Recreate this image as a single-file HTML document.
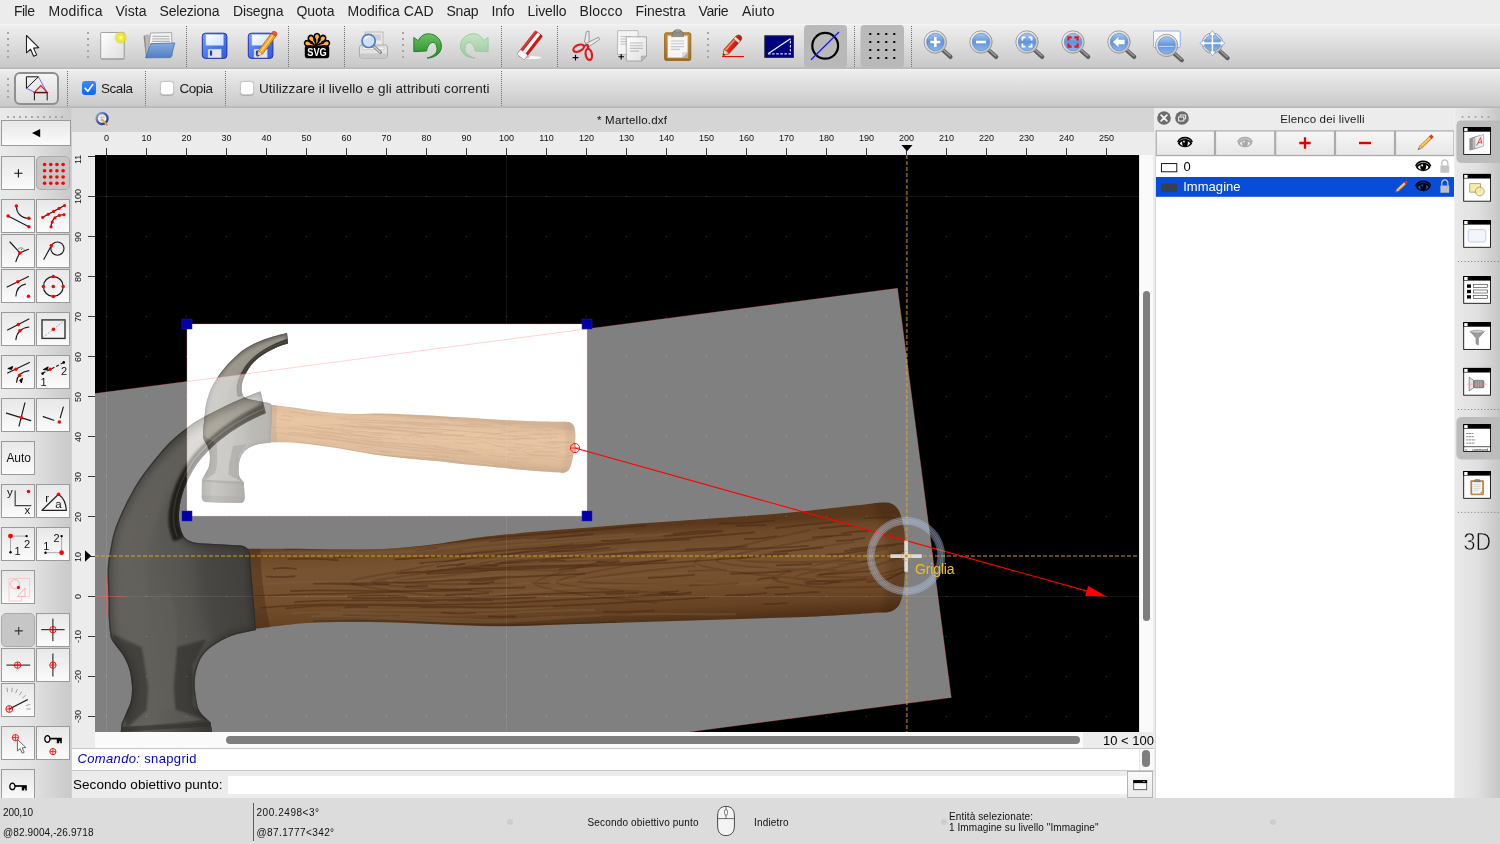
<!DOCTYPE html>
<html lang="it"><head><meta charset="utf-8"><title>Martello.dxf</title>
<style>
*{box-sizing:border-box;margin:0;padding:0}
html,body{width:1500px;height:844px;overflow:hidden;background:#ececec;font-family:"Liberation Sans",sans-serif;}
#root{position:absolute;left:0;top:0;width:1500px;height:844px;will-change:transform}
.t{position:absolute;white-space:nowrap;display:block}
.abs{position:absolute}
#menubar{position:absolute;left:0;top:0;width:1500px;height:24px;background:#ececec}
#tb1{position:absolute;left:0;top:24px;width:1500px;height:45px;background:linear-gradient(#f7f7f7 0,#eeeeee 1.5px,#e6e6e6 25%,#d6d6d6 62%,#c9c9c9 42.5px,#b8b8b8 44px,#b8b8b8)}
#tb2{position:absolute;left:0;top:69px;width:1500px;height:39px;background:linear-gradient(#f6f6f6 0,#ededed 1.5px,#e4e4e4 25%,#d6d6d6 62%,#cacaca 36.5px,#b7b7b7 38px,#b7b7b7)}
.vsep{position:absolute;width:0;border-left:1px dotted #6e6e6e}
#left{position:absolute;left:0;top:108px;width:72px;height:690px;background:linear-gradient(90deg,#eaeaea,#e4e4e4 40%,#c9c9c9);border-right:1px solid #d0d0d0;overflow:hidden}
.lb{position:absolute;width:34px;height:34px;border:1px solid #9a9a9a;background:linear-gradient(#e8e8e8,#f0f0f0 45%,#fbfbfb);}
.lb.on{background:#c6c6c6;border-color:#a9a9a9;border-radius:5px}
.lb svg{position:absolute;left:0;top:0}
#doc{position:absolute;left:72px;top:108px;width:1082px;height:690px;background:#ececec}
#status{position:absolute;left:0;top:798px;width:1500px;height:46px;background:#dcdcdc}
#layers{position:absolute;left:1154px;top:108px;width:301px;height:690px;background:#ececec}
#rtb{position:absolute;left:1454px;top:108px;width:46px;height:690px;background:linear-gradient(90deg,#e9e9e9,#e0e0e0 50%,#c6c6c6);border-left:1px solid #f0f0f0}

#titlebar{position:absolute;left:0;top:0;width:1082px;height:24px;background:#d5d5d5}
#hruler{position:absolute;left:0;top:24px;width:1082px;height:23px;background:#ececec;overflow:hidden}
#vruler{position:absolute;left:0;top:47px;width:23px;height:577px;background:#ececec;overflow:hidden}
#canvas{position:absolute;left:23px;top:47px;width:1044px;height:577px;background:#000;overflow:hidden}
#hscroll{position:absolute;left:23px;top:624px;width:1059px;height:16px;background:linear-gradient(90deg,#fafafa 0,#fafafa 988px,#ececec 988px)}
#vscroll{position:absolute;left:1067px;top:47px;width:14px;height:577px;background:#fafafa;border-left:1px solid #e6e6e6}
.thumb{position:absolute;background:#7e7e7e;border-radius:4px}
#cmd{position:absolute;left:0;top:640px;width:1082px;height:23px;background:#fff;border-top:1px solid #c4c4c4;border-bottom:1px solid #c9c9c9}
#inp{position:absolute;left:155.5px;top:668px;width:899px;height:18px;background:#fff}
#inbtn{position:absolute;left:1055px;top:663px;width:26px;height:27px;border:1px solid #b4b4b4;background:linear-gradient(#fafafa,#e9e9e9)}
.vl{position:absolute;white-space:nowrap;font-size:9px;line-height:10px;color:#111;transform-origin:0 0;transform:rotate(-90deg)}
</style></head>
<body>
<div id="root">
<div id="menubar">
<span class="t" style="left:14.00px;top:1.65px;font-size:14px;line-height:19px;color:#1e1e1e;letter-spacing:-0.520px;">File</span>
<span class="t" style="left:48.50px;top:1.65px;font-size:14px;line-height:19px;color:#1e1e1e;letter-spacing:0.267px;">Modifica</span>
<span class="t" style="left:115.50px;top:1.65px;font-size:14px;line-height:19px;color:#1e1e1e;letter-spacing:0.032px;">Vista</span>
<span class="t" style="left:159.50px;top:1.65px;font-size:14px;line-height:19px;color:#1e1e1e;letter-spacing:-0.186px;">Seleziona</span>
<span class="t" style="left:233.00px;top:1.65px;font-size:14px;line-height:19px;color:#1e1e1e;letter-spacing:-0.144px;">Disegna</span>
<span class="t" style="left:296.50px;top:1.65px;font-size:14px;line-height:19px;color:#1e1e1e;letter-spacing:-0.034px;">Quota</span>
<span class="t" style="left:347.50px;top:1.65px;font-size:14px;line-height:19px;color:#1e1e1e;letter-spacing:0.038px;">Modifica CAD</span>
<span class="t" style="left:446.50px;top:1.65px;font-size:14px;line-height:19px;color:#1e1e1e;letter-spacing:-0.233px;">Snap</span>
<span class="t" style="left:491.50px;top:1.65px;font-size:14px;line-height:19px;color:#1e1e1e;letter-spacing:-0.117px;">Info</span>
<span class="t" style="left:527.50px;top:1.65px;font-size:14px;line-height:19px;color:#1e1e1e;letter-spacing:-0.115px;">Livello</span>
<span class="t" style="left:579.50px;top:1.65px;font-size:14px;line-height:19px;color:#1e1e1e;letter-spacing:0.196px;">Blocco</span>
<span class="t" style="left:635.50px;top:1.65px;font-size:14px;line-height:19px;color:#1e1e1e;letter-spacing:-0.082px;">Finestra</span>
<span class="t" style="left:698.50px;top:1.65px;font-size:14px;line-height:19px;color:#1e1e1e;letter-spacing:-0.411px;">Varie</span>
<span class="t" style="left:742.00px;top:1.65px;font-size:14px;line-height:19px;color:#1e1e1e;letter-spacing:0.147px;">Aiuto</span>
</div>
<div id="tb1">
<div class="abs" style="left:7px;top:8px;width:2px;height:2px;background:#a6a6a6"></div><div class="abs" style="left:7px;top:14px;width:2px;height:2px;background:#a6a6a6"></div><div class="abs" style="left:7px;top:20px;width:2px;height:2px;background:#a6a6a6"></div><div class="abs" style="left:7px;top:26px;width:2px;height:2px;background:#a6a6a6"></div><div class="abs" style="left:7px;top:32px;width:2px;height:2px;background:#a6a6a6"></div>
<div class="abs" style="left:87px;top:8px;width:2px;height:2px;background:#a6a6a6"></div><div class="abs" style="left:87px;top:14px;width:2px;height:2px;background:#a6a6a6"></div><div class="abs" style="left:87px;top:20px;width:2px;height:2px;background:#a6a6a6"></div><div class="abs" style="left:87px;top:26px;width:2px;height:2px;background:#a6a6a6"></div><div class="abs" style="left:87px;top:32px;width:2px;height:2px;background:#a6a6a6"></div>
<div class="abs" style="left:402px;top:8px;width:2px;height:2px;background:#a6a6a6"></div><div class="abs" style="left:402px;top:14px;width:2px;height:2px;background:#a6a6a6"></div><div class="abs" style="left:402px;top:20px;width:2px;height:2px;background:#a6a6a6"></div><div class="abs" style="left:402px;top:26px;width:2px;height:2px;background:#a6a6a6"></div><div class="abs" style="left:402px;top:32px;width:2px;height:2px;background:#a6a6a6"></div>
<div class="abs" style="left:707px;top:8px;width:2px;height:2px;background:#a6a6a6"></div><div class="abs" style="left:707px;top:14px;width:2px;height:2px;background:#a6a6a6"></div><div class="abs" style="left:707px;top:20px;width:2px;height:2px;background:#a6a6a6"></div><div class="abs" style="left:707px;top:26px;width:2px;height:2px;background:#a6a6a6"></div><div class="abs" style="left:707px;top:32px;width:2px;height:2px;background:#a6a6a6"></div>
<div class="vsep" style="left:185.5px;top:1.5px;height:41px"></div>
<div class="vsep" style="left:288.0px;top:1.5px;height:41px"></div>
<div class="vsep" style="left:344.0px;top:1.5px;height:41px"></div>
<div class="vsep" style="left:501.0px;top:1.5px;height:41px"></div>
<div class="vsep" style="left:557.0px;top:1.5px;height:41px"></div>
<div class="vsep" style="left:853.5px;top:1.5px;height:41px"></div>
<div class="vsep" style="left:910.5px;top:1.5px;height:41px"></div>
<svg class="abs" style="left:0;top:0" width="1500" height="45" viewBox="0 24 1500 45">
<defs>
<linearGradient id="pg" x1="0" y1="0" x2="1" y2="1"><stop offset="0" stop-color="#fff"/><stop offset="1" stop-color="#dedede"/></linearGradient>
<radialGradient id="glow"><stop offset="0" stop-color="#ffffc8"/><stop offset=".3" stop-color="#f4ee3a"/><stop offset=".7" stop-color="#e2dc2a" stop-opacity=".75"/><stop offset="1" stop-color="#e2dc2a" stop-opacity="0"/></radialGradient>
<linearGradient id="fold" x1="0" y1="0" x2="0" y2="1"><stop offset="0" stop-color="#86ace0"/><stop offset="1" stop-color="#4f7fc4"/></linearGradient>
<linearGradient id="flp" x1="0" y1="0" x2="1" y2="1"><stop offset="0" stop-color="#7aa2ff"/><stop offset=".5" stop-color="#4a78ee"/><stop offset="1" stop-color="#2f5be0"/></linearGradient>
<linearGradient id="lbl" x1="0" y1="0" x2="1" y2="1"><stop offset="0" stop-color="#fff"/><stop offset="1" stop-color="#cfe0ff"/></linearGradient>
<linearGradient id="grn" x1="0" y1="0" x2="0" y2="1"><stop offset="0" stop-color="#6fc060"/><stop offset="1" stop-color="#218a2c"/></linearGradient>
<linearGradient id="grn2" x1="0" y1="0" x2="0" y2="1"><stop offset="0" stop-color="#c4e4bf"/><stop offset="1" stop-color="#8cc892"/></linearGradient>
<linearGradient id="lensb" x1="0" y1="0" x2="0" y2="1"><stop offset="0" stop-color="#a9c8f2"/><stop offset=".5" stop-color="#5f93dc"/><stop offset="1" stop-color="#8ab6ee"/></linearGradient>
<linearGradient id="ring" x1="0" y1="0" x2="1" y2="1"><stop offset="0" stop-color="#fafafa"/><stop offset="1" stop-color="#b8b8b8"/></linearGradient>
<linearGradient id="clipb" x1="0" y1="0" x2="0" y2="1"><stop offset="0" stop-color="#c98a2e"/><stop offset="1" stop-color="#a86c1c"/></linearGradient>
<linearGradient id="pencr" x1="0" y1="0" x2="1" y2="1"><stop offset="0" stop-color="#ff6a5a"/><stop offset=".5" stop-color="#e02214"/><stop offset="1" stop-color="#a8140c"/></linearGradient>
<g id="mag">
 <path d="M7.5 8 L15.2 14.9" stroke="#5e5e5e" stroke-width="4.2" stroke-linecap="round"/>
 <path d="M8 7.6 L14.8 13.8" stroke="#9a9a9a" stroke-width="1.5" stroke-linecap="round"/>
 <circle cx="0" cy="0" r="11.2" fill="url(#ring)" stroke="#8a8a8a" stroke-width=".8"/>
 <circle cx="0" cy="0" r="8.7" fill="url(#lensb)" stroke="#5a7fb8" stroke-width=".6"/>
</g>
</defs>
<rect x="804" y="25" width="43" height="42.5" rx="4" fill="#b9b9b9"/>
<rect x="860.5" y="25" width="43.5" height="42.5" rx="4" fill="#b9b9b9"/>
<path d="M26.5 35.5 L26.5 52.8 L30.6 49.2 L33.6 56.2 L36.6 54.9 L33.6 48.1 L38.8 47.6z" fill="#fff" stroke="#222" stroke-width="1.1" stroke-linejoin="round"/>
<rect x="101" y="33" width="23.5" height="27" rx="1" fill="#9a9a9a" opacity=".55"/>
<rect x="100.7" y="32.5" width="23.5" height="26.3" rx=".8" fill="url(#pg)" stroke="#8e8e8e" stroke-width=".8"/>
<circle cx="120.8" cy="37.7" r="7" fill="url(#glow)"/>
<path d="M143.5 36 L148 34.5 L151 58 L146 58z" fill="#8a8a8a"/>
<path d="M145 35.5 L149.5 34.8 L152 58 L147 58z" fill="#b9b9b9"/>
<path d="M150.5 33 L171.5 32.6 L172.5 56 L147.5 56z" fill="#f4f4f4" stroke="#8a8a8a" stroke-width=".7"/>
<path d="M152.5 36.3 H169.5 M152.2 38.8 H169.8 M152 41.3 H170" stroke="#b5b5b5" stroke-width="1.3"/>
<path d="M150.8 43.6 L174.8 43 L170.8 57.6 L145.6 57.8z" fill="url(#fold)" stroke="#4470b4" stroke-width=".8" stroke-linejoin="round"/>
<rect x="202.3" y="33.2" width="24.6" height="25.2" rx="3.2" fill="url(#flp)" stroke="#2230a6" stroke-width="1"/>
<rect x="205.9" y="34.4" width="17.6" height="11" fill="url(#lbl)" stroke="#9db8f4" stroke-width=".5"/>
<rect x="207.9" y="49" width="13.6" height="8.9" fill="#e4e4ea" stroke="#6c86d8" stroke-width=".5"/>
<rect x="209.9" y="50.6" width="2.2" height="5" fill="#1f3cc0"/>
<rect x="248.3" y="33.2" width="24.6" height="25.2" rx="3.2" fill="url(#flp)" stroke="#2230a6" stroke-width="1"/>
<rect x="251.9" y="34.4" width="17.6" height="11" fill="url(#lbl)" stroke="#9db8f4" stroke-width=".5"/>
<rect x="253.9" y="49" width="13.6" height="8.9" fill="#e4e4ea" stroke="#6c86d8" stroke-width=".5"/>
<rect x="255.9" y="50.6" width="2.2" height="5" fill="#1f3cc0"/>
<path d="M258.3 50.8 L271.3 33.2 L275.8 36.4 L262.6 54z" fill="#f5a623" stroke="#a85f10" stroke-width=".7"/>
<path d="M260.4 52.3 L273.5 34.7" stroke="#ffd68a" stroke-width="1.3"/>
<path d="M271.3 33.2 L272.6 31.6 Q274.8 30.6 276.6 32.6 L277 34.8 L275.8 36.4z" fill="#e8574a" stroke="#a83228" stroke-width=".5"/>
<path d="M258.3 50.8 L257.2 56.6 L262.6 54z" fill="#f1d9b0" stroke="#a85f10" stroke-width=".5"/>
<path d="M257.2 56.6 L257.7 54.4 L259.3 55.6z" fill="#222"/>
<g stroke="#000" stroke-width="1.6" fill="#ffb13b" stroke-linejoin="round">
<path transform="translate(317 46.5) rotate(-72)" d="M-1.5 0 L-1.5 -7 C-4 -9.5 -2.5 -13 0 -13 C2.5 -13 4 -9.5 1.5 -7 L1.5 0z"/>
<path transform="translate(317 46.5) rotate(-36)" d="M-1.5 0 L-1.5 -7 C-4 -9.5 -2.5 -13 0 -13 C2.5 -13 4 -9.5 1.5 -7 L1.5 0z"/>
<path transform="translate(317 46.5) rotate(0)" d="M-1.5 0 L-1.5 -7 C-4 -9.5 -2.5 -13 0 -13 C2.5 -13 4 -9.5 1.5 -7 L1.5 0z"/>
<path transform="translate(317 46.5) rotate(36)" d="M-1.5 0 L-1.5 -7 C-4 -9.5 -2.5 -13 0 -13 C2.5 -13 4 -9.5 1.5 -7 L1.5 0z"/>
<path transform="translate(317 46.5) rotate(72)" d="M-1.5 0 L-1.5 -7 C-4 -9.5 -2.5 -13 0 -13 C2.5 -13 4 -9.5 1.5 -7 L1.5 0z"/>
</g>
<rect x="304.8" y="45.6" width="24.4" height="12.6" rx="2.6" fill="#000"/>
<text x="317" y="56.4" font-family="Liberation Sans, sans-serif" font-weight="bold" font-size="10.8" fill="#fff" text-anchor="middle" textLength="19.5" lengthAdjust="spacingAndGlyphs">SVG</text>
<rect x="365" y="32" width="18" height="14" fill="#e9e9e9" stroke="#a8a8a8" stroke-width=".7"/>
<rect x="372" y="34.5" width="9" height="6" fill="#d0d0d0"/>
<path d="M361.5 45 L385.5 45 Q387.5 45.3 387.5 48 L387.5 55.8 Q387.3 58 385 58 L361.6 58 Q359.4 57.8 359.4 55.6 L359.4 48 Q359.6 45.2 361.5 45z" fill="#e3e3e3" stroke="#9c9c9c" stroke-width=".8"/>
<rect x="360" y="53.4" width="27" height="4.4" rx="1.4" fill="#c9c9c9"/>
<rect x="362.5" y="47" width="21.5" height="2.4" fill="#f8f8f8" stroke="#aaa" stroke-width=".4"/>
<path d="M373.6 46.2 L380.5 52.4" stroke="#8d8d8d" stroke-width="3.2" stroke-linecap="round"/>
<path d="M373.6 46.2 L380 52" stroke="#d2d2d2" stroke-width="1.2" stroke-linecap="round"/>
<circle cx="368.6" cy="40.9" r="6.6" fill="#cfe0f6" stroke="#4f7dc8" stroke-width="1.7"/>
<path d="M364.8 39.4 A4.2 4.2 0 0 1 370.5 36.8" stroke="#fff" stroke-width="1.4" fill="none" opacity=".9"/>
<path d="M413.8 37.4 L413.8 51.7 L426.6 51 C427 47.5 429.5 42.6 432.8 42.4 C435.5 42.4 437.2 46 437 49.9 C436.6 53.5 433 56.5 427 58.1 C437 57.7 442.1 51.6 441.4 45 C440.5 37.6 433.5 32.7 426 34 C422.6 34.8 420 36.8 418.2 40.7z" fill="url(#grn)" stroke="#1d7a28" stroke-width=".9" stroke-linejoin="round"/>
<g opacity=".85"><path transform="translate(901.9 0) scale(-1 1)" d="M413.8 37.4 L413.8 51.7 L426.6 51 C427 47.5 429.5 42.6 432.8 42.4 C435.5 42.4 437.2 46 437 49.9 C436.6 53.5 433 56.5 427 58.1 C437 57.7 442.1 51.6 441.4 45 C440.5 37.6 433.5 32.7 426 34 C422.6 34.8 420 36.8 418.2 40.7z" fill="url(#grn2)" stroke="#8cc592" stroke-width=".9" stroke-linejoin="round"/></g>
<ellipse cx="530" cy="57.6" rx="12" ry="1.5" fill="#fff" opacity=".85"/>
<ellipse cx="524" cy="57" rx="6" ry="1.6" fill="#8c8c8c" opacity=".45"/>
<g transform="translate(529.8 45.2) rotate(-52)"><rect x="-15" y="-4.6" width="30" height="9.2" rx="1.4" fill="#d01818" stroke="#8c0f0f" stroke-width=".5"/><rect x="-9.4" y="-1.7" width="24.2" height="3.4" fill="#fff"/><rect x="-15" y="-4.6" width="5.8" height="9.2" rx="1" fill="#f6f6f6" stroke="#bdbdbd" stroke-width=".5"/><rect x="-9.2" y="-4.6" width="24.2" height="2" fill="#ee4a4a" opacity=".6"/></g>
<path d="M584.4 42 L586.4 31.6 L589 31 L589.2 45z" fill="#e8e8e8" stroke="#777" stroke-width=".7" stroke-linejoin="round"/>
<path d="M585.6 43.6 L598.6 37.2 L599.8 39.4 L588.6 46.8z" fill="#e8e8e8" stroke="#777" stroke-width=".7" stroke-linejoin="round"/>
<ellipse cx="578.6" cy="48.2" rx="5.6" ry="3.1" transform="rotate(-24 578.6 48.2)" fill="none" stroke="#dc1c24" stroke-width="2.2"/>
<ellipse cx="588.8" cy="54.4" rx="3.1" ry="5.6" transform="rotate(-12 588.8 54.4)" fill="none" stroke="#dc1c24" stroke-width="2.2"/>
<path d="M583 46 L587.6 45 L588.6 49" stroke="#dc1c24" stroke-width="2.2" fill="none"/>
<path d="M572.6 57.6 H578.4 M575.5 54.7 V60.5" stroke="#000" stroke-width="1.1"/>
<path d="M617.6 30.6 L638 30.6 L638.6 54.4 L617.4 54.4z" fill="#f3f3f3" stroke="#a6a6a6" stroke-width=".7"/>
<path d="M620.6 36.5 H631 M620.6 39 H631 M620.6 41.5 H631 M620.6 44 H628" stroke="#c3c3c3" stroke-width="1"/>
<path d="M626.2 36.8 L646.4 36.8 L646.6 56 L641.4 61 L626.4 61z" fill="url(#pg)" stroke="#9a9a9a" stroke-width=".8"/>
<path d="M646.6 56 L641.4 61 L641.2 56.2z" fill="#bdbdbd" stroke="#8e8e8e" stroke-width=".5"/>
<path d="M630 43 H643 M630 45.7 H643 M630 48.4 H643 M630 51.1 H639" stroke="#bfbfbf" stroke-width="1.1"/>
<path d="M618.4 56.8 H624 M621.2 54 V59.6" stroke="#000" stroke-width="1.1"/>
<rect x="664.6" y="32.8" width="26.2" height="27.6" rx="1.6" fill="url(#clipb)" stroke="#8c5a14" stroke-width=".8"/>
<path d="M667.6 35.6 H687.8 V57.8 H667.6z" fill="#f6f6f6" stroke="#b0b0b0" stroke-width=".5"/>
<path d="M687.8 52.6 L682.6 57.8 L687.8 57.8z" fill="#a8a8a8"/><path d="M682.6 57.8 L682.8 52.8 L687.8 52.6z" fill="#dedede" stroke="#aaa" stroke-width=".4"/>
<path d="M671 41 H684 M671 43.8 H684 M671 46.6 H684 M671 49.4 H680" stroke="#c6c6c6" stroke-width="1.1"/>
<path d="M671.6 36.6 L672.8 32.2 Q673.2 31 674.6 31 L680.8 31 Q682.2 31 682.6 32.2 L683.8 36.6z" fill="#8e8e86" stroke="#66665e" stroke-width=".6"/>
<rect x="674.6" y="29.8" width="6.2" height="2.2" rx=".8" fill="#a4a49c" stroke="#66665e" stroke-width=".5"/>
<path d="M722 56.5 H744" stroke="#f00" stroke-width="1.1"/>
<g transform="translate(723 55.4) rotate(-48)"><path d="M0 0 L5.4 -3.3 L22.8 -3.3 Q26.4 -3 26.4 0 Q26.4 3 22.8 3.3 L5.4 3.3z" fill="url(#pencr)" stroke="#7a3a10" stroke-width=".6"/><path d="M0 0 L5.4 -3.3 L5.4 3.3z" fill="#f0d2a0" stroke="#7a5a20" stroke-width=".5"/><path d="M0 0 L1.9 -1.15 L1.9 1.15z" fill="#222"/><rect x="19.6" y="-3.3" width="2.6" height="6.6" fill="#d9d9d9" stroke="#888" stroke-width=".3"/><path d="M6 -1.6 H19" stroke="#ff9a8a" stroke-width="1.2"/></g>
<rect x="764.8" y="35.8" width="28.6" height="21.6" fill="#000080" stroke="#2a2a2a" stroke-width="1"/>
<path d="M768 53.8 L790.4 38.8" stroke="#fff" stroke-width="1.1"/>
<path d="M768 53.8 H790.4 V38.8" stroke="#d8d8f4" stroke-width="1.2" stroke-dasharray="2.6 1.5" fill="none"/>
<circle cx="825.2" cy="45.8" r="12.9" fill="none" stroke="#000" stroke-width="2.2"/>
<path d="M811 59.8 L839 32" stroke="#1414ff" stroke-width="1.2"/>
<rect x="869.3" y="33" width="2" height="2" fill="#000"/>
<rect x="869.3" y="41" width="2" height="2" fill="#000"/>
<rect x="869.3" y="49" width="2" height="2" fill="#000"/>
<rect x="869.3" y="57" width="2" height="2" fill="#000"/>
<rect x="877.3" y="33" width="2" height="2" fill="#000"/>
<rect x="877.3" y="41" width="2" height="2" fill="#000"/>
<rect x="877.3" y="49" width="2" height="2" fill="#000"/>
<rect x="877.3" y="57" width="2" height="2" fill="#000"/>
<rect x="885.3" y="33" width="2" height="2" fill="#000"/>
<rect x="885.3" y="41" width="2" height="2" fill="#000"/>
<rect x="885.3" y="49" width="2" height="2" fill="#000"/>
<rect x="885.3" y="57" width="2" height="2" fill="#000"/>
<rect x="893.3" y="33" width="2" height="2" fill="#000"/>
<rect x="893.3" y="41" width="2" height="2" fill="#000"/>
<rect x="893.3" y="49" width="2" height="2" fill="#000"/>
<rect x="893.3" y="57" width="2" height="2" fill="#000"/>
<g transform="translate(935.3 42)"><use href="#mag"/><path d="M-5 0H5M0 -5V5" stroke="#fff" stroke-width="2.6"/></g>
<g transform="translate(981 42)"><use href="#mag"/><path d="M-5 0H5" stroke="#fff" stroke-width="2.6"/></g>
<g transform="translate(1027 42)"><use href="#mag"/><path d="M-4.6 -1.6V-4.6H-1.6M1.6 -4.6H4.6V-1.6M4.6 1.6V4.6H1.6M-1.6 4.6H-4.6V1.6" stroke="#fff" stroke-width="1.7" fill="none"/></g>
<g transform="translate(1073 42)"><use href="#mag"/><path d="M-4.6 -1.4V-4.6H-1.4M1.4 -4.6H4.6V-1.4M4.6 1.4V4.6H1.4M-1.4 4.6H-4.6V1.4" stroke="#f01010" stroke-width="2.2" fill="none"/></g>
<g transform="translate(1119 42)"><use href="#mag"/><path d="M-6 0 L-.6 -5 L-.6 -2.2 L5.6 -2.2 L5.6 2.2 L-.6 2.2 L-.6 5z" fill="#fff"/></g>
<rect x="1153.6" y="31" width="26.6" height="16.6" rx="1" fill="#fafcff" stroke="#86a8e0" stroke-width=".9"/>
<g transform="translate(1166.6 45.4)"><use href="#mag"/><path d="M-8 1 H8" stroke="#d6e6fa" stroke-width="1.2" opacity=".7"/></g>
<g transform="translate(1212.4 43.2)"><path d="M7.5 8 L15.2 14.9" stroke="#5e5e5e" stroke-width="4.2" stroke-linecap="round"/><path d="M8 7.6 L14.8 13.8" stroke="#9a9a9a" stroke-width="1.5" stroke-linecap="round"/><circle r="10.2" fill="url(#ring)" stroke="#8a8a8a" stroke-width=".8"/><circle r="8" fill="url(#lensb)" stroke="#5a7fb8" stroke-width=".6"/><path d="M0 -12.6 L3.4 -8 L1.2 -8 L1.2 -1.2 L8 -1.2 L8 -3.4 L12.6 0 L8 3.4 L8 1.2 L1.2 1.2 L1.2 8 L3.4 8 L0 12.6 L-3.4 8 L-1.2 8 L-1.2 1.2 L-8 1.2 L-8 3.4 L-12.6 0 L-8 -3.4 L-8 -1.2 L-1.2 -1.2 L-1.2 -8 L-3.4 -8z" fill="#fff" stroke="#6f9ae0" stroke-width=".7"/></g>
</svg>
</div>
<div id="tb2">
<div class="abs" style="left:7px;top:9px;width:2px;height:2px;background:#a6a6a6"></div><div class="abs" style="left:7px;top:15px;width:2px;height:2px;background:#a6a6a6"></div><div class="abs" style="left:7px;top:21px;width:2px;height:2px;background:#a6a6a6"></div><div class="abs" style="left:7px;top:27px;width:2px;height:2px;background:#a6a6a6"></div>
<div class="vsep" style="left:67.0px;top:2px;height:35px"></div>
<div class="vsep" style="left:145.0px;top:2px;height:35px"></div>
<div class="vsep" style="left:225.0px;top:2px;height:35px"></div>
<div class="vsep" style="left:501.0px;top:2px;height:35px"></div>
<div class="abs" style="left:14px;top:3px;width:45px;height:33px;border:2px solid #8f8f8f;border-radius:6px;background:linear-gradient(#f4f4f4,#dcdcdc)"></div>
<svg class="abs" style="left:14px;top:3px" width="46" height="34" viewBox="14 72 46 34"><path d="M26.4 76.8 H38.4 L26.4 88.4z" fill="none" stroke="#111" stroke-width="1"/><path d="M38.4 76.8 L47 92.4 M26.4 88.4 L34.6 92.2" stroke="#3a3ae0" stroke-width=".7" fill="none"/><path d="M34.4 92.4 L40.8 85.6 L47.2 92.4z" fill="none" stroke="#f01616" stroke-width="1.3"/><path d="M34.4 100.4 V92.8 H47.2 V100.4" fill="none" stroke="#111" stroke-width="1"/></svg>
<div class="abs" style="left:82px;top:12px;width:14px;height:14px;border-radius:3.2px;background:linear-gradient(#3b8bff,#0a6af5)"></div>
<svg class="abs" style="left:82px;top:12px" width="14" height="14" viewBox="0 0 14 14"><path d="M3.2 7.4 L5.8 10.2 L10.8 3.6" fill="none" stroke="#fff" stroke-width="1.7" stroke-linecap="round" stroke-linejoin="round"/></svg>
<div class="abs" style="left:159.5px;top:12px;width:14px;height:14px;border-radius:3.2px;background:#fff;border:.6px solid #c9c9c9;box-shadow:0 .5px 1px rgba(0,0,0,.18)"></div>
<div class="abs" style="left:239.5px;top:12px;width:14px;height:14px;border-radius:3.2px;background:#fff;border:.6px solid #c9c9c9;box-shadow:0 .5px 1px rgba(0,0,0,.18)"></div>
<span class="t" style="left:101.00px;top:11.12px;font-size:13.5px;line-height:18px;color:#1c1c1c;letter-spacing:-0.443px;">Scala</span>
<span class="t" style="left:179.50px;top:11.12px;font-size:13.5px;line-height:18px;color:#1c1c1c;letter-spacing:-0.444px;">Copia</span>
<span class="t" style="left:259.00px;top:11.12px;font-size:13.5px;line-height:18px;color:#1c1c1c;letter-spacing:0.054px;">Utilizzare il livello e gli attributi correnti</span>
</div>
<div id="left">
<div class="abs" style="left:7.0px;top:8px;width:2px;height:2px;background:#a8a8a8"></div>
<div class="abs" style="left:13.0px;top:8px;width:2px;height:2px;background:#a8a8a8"></div>
<div class="abs" style="left:19.0px;top:8px;width:2px;height:2px;background:#a8a8a8"></div>
<div class="abs" style="left:25.0px;top:8px;width:2px;height:2px;background:#a8a8a8"></div>
<div class="abs" style="left:31.0px;top:8px;width:2px;height:2px;background:#a8a8a8"></div>
<div class="abs" style="left:37.0px;top:8px;width:2px;height:2px;background:#a8a8a8"></div>
<div class="abs" style="left:43.0px;top:8px;width:2px;height:2px;background:#a8a8a8"></div>
<div class="abs" style="left:49.0px;top:8px;width:2px;height:2px;background:#a8a8a8"></div>
<div class="abs" style="left:55.0px;top:8px;width:2px;height:2px;background:#a8a8a8"></div>
<div class="abs" style="left:61.0px;top:8px;width:2px;height:2px;background:#a8a8a8"></div>
<div class="lb" style="left:1px;top:12px;width:70px;height:26px"><svg width="70" height="26" viewBox="0 0 70 26" style="left:-1px;top:-1px"><path d="M31 13.1L39.2 9V17.2z" fill="#000"/></svg></div>
<div class="lb" style="left:1px;top:48px"><svg width="34" height="34" viewBox="0 0 34 34" style="left:-.5px;top:-.5px"><path d="M12.3 16.3H20.5M16.4 12.2V20.4" stroke="#111" stroke-width="1.1"/></svg></div>
<div class="lb on" style="left:36px;top:48px"><svg width="34" height="34" viewBox="0 0 34 34" style="left:-.5px;top:-.5px"><circle cx="7.6" cy="7.5" r="1.8" fill="#ff0000"/><circle cx="7.6" cy="13.73" r="1.8" fill="#ff0000"/><circle cx="7.6" cy="19.96" r="1.8" fill="#ff0000"/><circle cx="7.6" cy="26.19" r="1.8" fill="#ff0000"/><circle cx="13.77" cy="7.5" r="1.8" fill="#ff0000"/><circle cx="13.77" cy="13.73" r="1.8" fill="#ff0000"/><circle cx="13.77" cy="19.96" r="1.8" fill="#ff0000"/><circle cx="13.77" cy="26.19" r="1.8" fill="#ff0000"/><circle cx="19.939999999999998" cy="7.5" r="1.8" fill="#ff0000"/><circle cx="19.939999999999998" cy="13.73" r="1.8" fill="#ff0000"/><circle cx="19.939999999999998" cy="19.96" r="1.8" fill="#ff0000"/><circle cx="19.939999999999998" cy="26.19" r="1.8" fill="#ff0000"/><circle cx="26.11" cy="7.5" r="1.8" fill="#ff0000"/><circle cx="26.11" cy="13.73" r="1.8" fill="#ff0000"/><circle cx="26.11" cy="19.96" r="1.8" fill="#ff0000"/><circle cx="26.11" cy="26.19" r="1.8" fill="#ff0000"/></svg></div>
<div class="lb" style="left:1px;top:91px"><svg width="34" height="34" viewBox="0 0 34 34" style="left:-.5px;top:-.5px"><path d="M6.1 15.9L26.9 26.8M14.4 6C14.4 13 19 18.3 26.9 18.3" stroke="#1a1a1a" stroke-width="1.15" fill="none" stroke-linecap="round"/><circle cx="6.1" cy="15.9" r="1.75" fill="#ff0000"/><circle cx="26.9" cy="26.8" r="1.75" fill="#ff0000"/><circle cx="14.4" cy="6" r="1.75" fill="#ff0000"/><circle cx="26.9" cy="18.3" r="1.75" fill="#ff0000"/></svg></div>
<div class="lb" style="left:36px;top:91px"><svg width="34" height="34" viewBox="0 0 34 34" style="left:-.5px;top:-.5px"><path d="M5.7 17.3L27.5 5.5M14 26.8C14.6 19 19.5 14.9 27 14.7" stroke="#1a1a1a" stroke-width="1.15" fill="none" stroke-linecap="round"/><circle cx="5.7" cy="17.3" r="1.6" fill="#ff0000"/><circle cx="11.15" cy="14.350000000000001" r="1.6" fill="#ff0000"/><circle cx="16.6" cy="11.4" r="1.6" fill="#ff0000"/><circle cx="22.05" cy="8.45" r="1.6" fill="#ff0000"/><circle cx="27.5" cy="5.5" r="1.6" fill="#ff0000"/><circle cx="14" cy="26.8" r="1.6" fill="#ff0000"/><circle cx="15.2" cy="22.1" r="1.6" fill="#ff0000"/><circle cx="18" cy="17.8" r="1.6" fill="#ff0000"/><circle cx="22.3" cy="15.4" r="1.6" fill="#ff0000"/><circle cx="27" cy="14.7" r="1.6" fill="#ff0000"/></svg></div>
<div class="lb" style="left:1px;top:126px"><svg width="34" height="34" viewBox="0 0 34 34" style="left:-.5px;top:-.5px"><path d="M8 7L17.9 17.9L26.5 14.3M17.9 17.9C16 21 14.6 24 13.9 26.6" stroke="#1a1a1a" stroke-width="1.15" fill="none" stroke-linecap="round"/><path d="M15.6 14.6C17.4 12 21.4 12.4 22.4 15.4" stroke="#444" stroke-width=".6" fill="none"/><circle cx="19.4" cy="14.6" r=".5" fill="#444"/><circle cx="17.9" cy="17.9" r="1.75" fill="#ff0000"/></svg></div>
<div class="lb" style="left:36px;top:126px"><svg width="34" height="34" viewBox="0 0 34 34" style="left:-.5px;top:-.5px"><circle cx="20.4" cy="13.6" r="6.6" stroke="#1a1a1a" stroke-width="1.15" fill="none" stroke-linecap="round"/><path d="M6.9 24.3L14.4 10.5" stroke="#1a1a1a" stroke-width="1.15" fill="none" stroke-linecap="round"/><circle cx="14.3" cy="10.6" r="1.75" fill="#ff0000"/></svg></div>
<div class="lb" style="left:1px;top:161px"><svg width="34" height="34" viewBox="0 0 34 34" style="left:-.5px;top:-.5px"><path d="M5.1 17L26.5 6.6M13.9 26C14.4 19.5 18 15.2 23.4 14.1" stroke="#1a1a1a" stroke-width="1.15" fill="none" stroke-linecap="round"/><circle cx="15.8" cy="11.8" r="1.75" fill="#ff0000"/><circle cx="26.5" cy="26.2" r="1.75" fill="#ff0000"/></svg></div>
<div class="lb" style="left:36px;top:161px"><svg width="34" height="34" viewBox="0 0 34 34" style="left:-.5px;top:-.5px"><circle cx="16.3" cy="16.5" r="9.9" stroke="#1a1a1a" stroke-width="1.15" fill="none" stroke-linecap="round"/><circle cx="16.3" cy="16.5" r="1.75" fill="#ff0000"/><circle cx="16.3" cy="6.6" r="1.75" fill="#ff0000"/><circle cx="16.3" cy="26.4" r="1.75" fill="#ff0000"/><circle cx="6.4" cy="16.5" r="1.75" fill="#ff0000"/><circle cx="26.2" cy="16.5" r="1.75" fill="#ff0000"/></svg></div>
<div class="lb" style="left:1px;top:204px"><svg width="34" height="34" viewBox="0 0 34 34" style="left:-.5px;top:-.5px"><path d="M5.6 17.1L26.9 6M13.9 26.6C14.6 19.6 19.5 15 26.9 14" stroke="#1a1a1a" stroke-width="1.15" fill="none" stroke-linecap="round"/><circle cx="16.3" cy="11.4" r="1.75" fill="#ff0000"/><circle cx="17.9" cy="17.8" r="1.75" fill="#ff0000"/></svg></div>
<div class="lb" style="left:36px;top:204px"><svg width="34" height="34" viewBox="0 0 34 34" style="left:-.5px;top:-.5px"><rect x="5" y="6.9" width="23" height="18.5" fill="none" stroke="#333" stroke-width="1.4"/><path d="M5.6 24.8L27.4 7.5" stroke="#888" stroke-width=".7" stroke-dasharray="2 1.4"/><circle cx="16.4" cy="16.2" r="1.75" fill="#ff0000"/></svg></div>
<div class="lb" style="left:1px;top:247px"><svg width="34" height="34" viewBox="0 0 34 34" style="left:-.5px;top:-.5px"><path d="M5.6 17L27.4 6.4M14.6 26.2C15 20 19 15.8 26.9 14.6" stroke="#1a1a1a" stroke-width="1.15" fill="none" stroke-linecap="round"/><path d="M5.8 12.6L10.8 10.4L9.6 13.6z M20.6 22.2L19.4 27L17.6 24.2z" fill="#000" stroke="#000" stroke-width=".8"/><circle cx="13.9" cy="13.2" r="1.75" fill="#ff0000"/><circle cx="17.6" cy="19.2" r="1.75" fill="#ff0000"/></svg></div>
<div class="lb" style="left:36px;top:247px"><svg width="34" height="34" viewBox="0 0 34 34" style="left:-.5px;top:-.5px"><path d="M5.8 17.2L27 6.4" stroke="#111" stroke-width="1.1" stroke-dasharray="3 2"/><path d="M6.2 13.6L11.2 10.8L10.2 14z" fill="#000" stroke="#000" stroke-width=".8"/><circle cx="26.8" cy="6.4" r="1.3" fill="#000"/><circle cx="5.6" cy="17.6" r="1.3" fill="#000"/><circle cx="13.2" cy="13.2" r="1.75" fill="#ff0000"/><text x="24" y="19.4" font-family="Liberation Sans, sans-serif" font-size="11" fill="#111">2</text><text x="3.4" y="30" font-family="Liberation Sans, sans-serif" font-size="11" fill="#111">1</text></svg></div>
<div class="lb" style="left:1px;top:290px"><svg width="34" height="34" viewBox="0 0 34 34" style="left:-.5px;top:-.5px"><path d="M4.4 14.1L28.8 21.6M22.9 3.9L17 27.1" stroke="#1a1a1a" stroke-width="1.15" fill="none" stroke-linecap="round"/><circle cx="19.4" cy="18.8" r="1.75" fill="#ff0000"/></svg></div>
<div class="lb" style="left:36px;top:290px"><svg width="34" height="34" viewBox="0 0 34 34" style="left:-.5px;top:-.5px"><path d="M6.2 17.6L16.8 21.2M26.3 8.1L23.2 18.8" stroke="#1a1a1a" stroke-width="1.15" fill="none" stroke-linecap="round"/><circle cx="22.3" cy="23.1" r="1.75" fill="#ff0000"/></svg></div>
<div class="lb" style="left:1px;top:333px"><svg width="34" height="34" viewBox="0 0 34 34" style="left:-.5px;top:-.5px"><text x="4.4" y="20.4" font-family="Liberation Sans, sans-serif" font-size="12.4" fill="#111" textLength="24.6" lengthAdjust="spacingAndGlyphs">Auto</text></svg></div>
<div class="lb" style="left:1px;top:376px"><svg width="34" height="34" viewBox="0 0 34 34" style="left:-.5px;top:-.5px"><path d="M13.2 5.6V20.6H29.3" stroke="#444" stroke-width="1.2" fill="none"/><text x="5" y="11.4" font-family="Liberation Sans, sans-serif" font-size="11.5" fill="#111">y</text><text x="22.6" y="28.8" font-family="Liberation Sans, sans-serif" font-size="11.5" fill="#111">x</text><circle cx="26.5" cy="6.4" r="1.75" fill="#ff0000"/></svg></div>
<div class="lb" style="left:36px;top:376px"><svg width="34" height="34" viewBox="0 0 34 34" style="left:-.5px;top:-.5px"><path d="M5 25.3L21.5 9.2C26 12.4 29 18.4 29.4 25.3z" stroke="#222" stroke-width="1.2" fill="none" stroke-linejoin="round"/><text x="8.2" y="17.4" font-family="Liberation Sans, sans-serif" font-size="11.5" fill="#111">r</text><text x="18.2" y="23" font-family="Liberation Sans, sans-serif" font-size="11.5" fill="#111">a</text><circle cx="21.5" cy="9.2" r="1.75" fill="#ff0000"/></svg></div>
<div class="lb" style="left:1px;top:419px"><svg width="34" height="34" viewBox="0 0 34 34" style="left:-.5px;top:-.5px"><path d="M8.5 8.1H24.6M8.5 8.1V24.2" stroke="#777" stroke-width=".6"/><circle cx="8.5" cy="8.1" r="2.4" fill="#ff0000"/><circle cx="24.6" cy="8.1" r="1.2" fill="#000"/><circle cx="8.5" cy="24.2" r="1.2" fill="#000"/><text x="22" y="19.8" font-family="Liberation Sans, sans-serif" font-size="11" fill="#111">2</text><text x="12.4" y="27.4" font-family="Liberation Sans, sans-serif" font-size="11" fill="#111">1</text></svg></div>
<div class="lb" style="left:36px;top:419px"><svg width="34" height="34" viewBox="0 0 34 34" style="left:-.5px;top:-.5px"><path d="M8.5 24.7H24.6V8.1" stroke="#777" stroke-width=".6" fill="none"/><circle cx="24.6" cy="24.7" r="2.4" fill="#ff0000"/><circle cx="24.6" cy="8.1" r="1.2" fill="#000"/><circle cx="8.5" cy="24.7" r="1.2" fill="#000"/><text x="16.6" y="13.8" font-family="Liberation Sans, sans-serif" font-size="11" fill="#111">2</text><text x="6.2" y="22.2" font-family="Liberation Sans, sans-serif" font-size="11" fill="#111">1</text></svg></div>
<div class="lb" style="left:1px;top:462px"><svg width="34" height="34" viewBox="0 0 34 34" style="left:-.5px;top:-.5px"><g fill="none" stroke="#f6b4b4" stroke-width="1"><path d="M7 7.4H27.6V25.4H19.4V30H7z" stroke="#f9caca"/><circle cx="13" cy="13.2" r="4.6"/><path d="M15.4 25.6L23 17V25.6z"/></g><circle cx="16.4" cy="16.4" r="1.6" fill="#ff0000"/></svg></div>
<div class="lb on" style="left:1px;top:505px"><svg width="34" height="34" viewBox="0 0 34 34" style="left:-.5px;top:-.5px"><path d="M12.7 16.9H20.7M16.7 12.9V20.9" stroke="#333" stroke-width="1.1"/></svg></div>
<div class="lb" style="left:36px;top:505px"><svg width="34" height="34" viewBox="0 0 34 34" style="left:-.5px;top:-.5px"><path d="M4.2 15.7H27.6M15.9 4.6V27.2" stroke="#111" stroke-width="1"/><circle cx="15.9" cy="15.7" r="3.2" fill="none" stroke="#ff0000" stroke-width=".9"/><path d="M12.7 15.7H19.1M15.9 12.5V18.9" stroke="#ff0000" stroke-width=".8"/></svg></div>
<div class="lb" style="left:1px;top:540px"><svg width="34" height="34" viewBox="0 0 34 34" style="left:-.5px;top:-.5px"><path d="M4.4 16.1H28.2" stroke="#111" stroke-width="1"/><circle cx="15.6" cy="16.1" r="3.2" fill="none" stroke="#ff0000" stroke-width=".9"/><path d="M12.399999999999999 16.1H18.8M15.6 12.900000000000002V19.3" stroke="#ff0000" stroke-width=".8"/></svg></div>
<div class="lb" style="left:36px;top:540px"><svg width="34" height="34" viewBox="0 0 34 34" style="left:-.5px;top:-.5px"><path d="M15.9 4.5V27.5" stroke="#111" stroke-width="1"/><circle cx="15.9" cy="16.1" r="3.2" fill="none" stroke="#ff0000" stroke-width=".9"/><path d="M12.7 16.1H19.1M15.9 12.900000000000002V19.3" stroke="#ff0000" stroke-width=".8"/></svg></div>
<div class="lb" style="left:1px;top:575px"><svg width="34" height="34" viewBox="0 0 34 34" style="left:-.5px;top:-.5px"><g stroke="#9a9a9a" stroke-width=".9"><path d="M24.3 25.0L28.8 25.0"/><path d="M23.9 21.5L28.3 20.5"/><path d="M20.3 14.1L23.8 11.2"/><path d="M17.3 11.2L19.9 7.6"/><path d="M13.7 9.2L15.4 5.1"/><path d="M9.7 8.2L10.3 3.7"/><path d="M5.5 8.1L5.1 3.6"/></g><path d="M7.3 25L25.8 15.5" stroke="#111" stroke-width="1.2"/><circle cx="7.3" cy="25" r="3.4" fill="none" stroke="#ff0000" stroke-width=".9"/><path d="M3.9 25H10.7M7.3 21.6V28.4" stroke="#ff0000" stroke-width=".8"/></svg></div>
<div class="lb" style="left:1px;top:618px"><svg width="34" height="34" viewBox="0 0 34 34" style="left:-.5px;top:-.5px"><circle cx="13.4" cy="10.6" r="3.1" fill="none" stroke="#ff0000" stroke-width=".9"/><path d="M10.3 10.6H16.5M13.4 7.5V13.7" stroke="#ff0000" stroke-width=".8"/><path d="M15.4 12.4L15.4 24L18.2 21.6L20.2 26.2L22.2 25.3L20.2 20.8L23.8 20.5z" fill="#fff" stroke="#555" stroke-width=".9" stroke-linejoin="round"/></svg></div>
<div class="lb" style="left:36px;top:618px"><svg width="34" height="34" viewBox="0 0 34 34" style="left:-.5px;top:-.5px"><g transform="translate(7.2 8.4)"><ellipse cx="3.2" cy="3.6" rx="2.6" ry="3.3" fill="none" stroke="#000" stroke-width="1.3"/><path d="M5.8 3.2H17.6" stroke="#000" stroke-width="1.7"/><path d="M12.6 3.4h5v4.4h-1.6v-2h-1v2h-2.4z" fill="#000"/></g><circle cx="15.9" cy="24.6" r="3.1" fill="none" stroke="#ff0000" stroke-width=".9"/><path d="M12.8 24.6H19.0M15.9 21.5V27.700000000000003" stroke="#ff0000" stroke-width=".8"/></svg></div>
<div class="lb" style="left:1px;top:661px"><svg width="34" height="34" viewBox="0 0 34 34" style="left:-.5px;top:-.5px"><g transform="translate(7.2 12.8)"><ellipse cx="3.2" cy="3.6" rx="2.6" ry="3.3" fill="none" stroke="#000" stroke-width="1.3"/><path d="M5.8 3.2H17.6" stroke="#000" stroke-width="1.7"/><path d="M12.6 3.4h5v4.4h-1.6v-2h-1v2h-2.4z" fill="#000"/></g></svg></div>
</div>
<div id="doc">
<div id="titlebar">
<span class="t" style="left:525.00px;top:4.72px;font-size:11.5px;line-height:15px;color:#111;letter-spacing:0.222px;">* Martello.dxf</span>
<svg class="abs" style="left:22px;top:2px" width="18" height="18" viewBox="0 0 18 18"><defs><linearGradient id="dring" x1="0" y1="0" x2="1" y2="1"><stop offset="0" stop-color="#a3b1d6"/><stop offset=".45" stop-color="#4a62a6"/><stop offset="1" stop-color="#1c357c"/></linearGradient></defs><circle cx="8.1" cy="8.5" r="5.5" fill="#f1f1f4" stroke="url(#dring)" stroke-width="2.3"/><path d="M5 7.6h6M7.6 5.4v6" stroke="#b9b9c0" stroke-width=".7"/><path d="M5.4 10.2h3.4M9.2 5.6l1 2" stroke="#e9a0a0" stroke-width=".7"/><path d="M8.3 8.7 L12.9 13.5 L11.7 14.6 L7.4 9.7z" fill="#f5b02a" stroke="#c9831a" stroke-width=".4"/><path d="M12.9 13.5l1.1 1.5q-.6 1-1.6.8L11.7 14.6z" fill="#e87a7a"/></svg>
</div>
<div id="hruler">
<span class="t" style="left:32.00px;top:0.08px;font-size:9px;line-height:12px;color:#111;">0</span>
<div class="abs" style="left:34.0px;top:16px;width:1px;height:7px;background:#3a3a3a"></div>
<span class="t" style="left:69.49px;top:0.08px;font-size:9px;line-height:12px;color:#111;">10</span>
<div class="abs" style="left:74.0px;top:16px;width:1px;height:7px;background:#3a3a3a"></div>
<span class="t" style="left:109.49px;top:0.08px;font-size:9px;line-height:12px;color:#111;">20</span>
<div class="abs" style="left:114.0px;top:16px;width:1px;height:7px;background:#3a3a3a"></div>
<span class="t" style="left:149.49px;top:0.08px;font-size:9px;line-height:12px;color:#111;">30</span>
<div class="abs" style="left:154.0px;top:16px;width:1px;height:7px;background:#3a3a3a"></div>
<span class="t" style="left:189.49px;top:0.08px;font-size:9px;line-height:12px;color:#111;">40</span>
<div class="abs" style="left:194.0px;top:16px;width:1px;height:7px;background:#3a3a3a"></div>
<span class="t" style="left:229.49px;top:0.08px;font-size:9px;line-height:12px;color:#111;">50</span>
<div class="abs" style="left:234.0px;top:16px;width:1px;height:7px;background:#3a3a3a"></div>
<span class="t" style="left:269.49px;top:0.08px;font-size:9px;line-height:12px;color:#111;">60</span>
<div class="abs" style="left:274.0px;top:16px;width:1px;height:7px;background:#3a3a3a"></div>
<span class="t" style="left:309.49px;top:0.08px;font-size:9px;line-height:12px;color:#111;">70</span>
<div class="abs" style="left:314.0px;top:16px;width:1px;height:7px;background:#3a3a3a"></div>
<span class="t" style="left:349.49px;top:0.08px;font-size:9px;line-height:12px;color:#111;">80</span>
<div class="abs" style="left:354.0px;top:16px;width:1px;height:7px;background:#3a3a3a"></div>
<span class="t" style="left:389.49px;top:0.08px;font-size:9px;line-height:12px;color:#111;">90</span>
<div class="abs" style="left:394.0px;top:16px;width:1px;height:7px;background:#3a3a3a"></div>
<span class="t" style="left:426.99px;top:0.08px;font-size:9px;line-height:12px;color:#111;">100</span>
<div class="abs" style="left:434.0px;top:16px;width:1px;height:7px;background:#3a3a3a"></div>
<span class="t" style="left:467.33px;top:0.08px;font-size:9px;line-height:12px;color:#111;">110</span>
<div class="abs" style="left:474.0px;top:16px;width:1px;height:7px;background:#3a3a3a"></div>
<span class="t" style="left:506.99px;top:0.08px;font-size:9px;line-height:12px;color:#111;">120</span>
<div class="abs" style="left:514.0px;top:16px;width:1px;height:7px;background:#3a3a3a"></div>
<span class="t" style="left:546.99px;top:0.08px;font-size:9px;line-height:12px;color:#111;">130</span>
<div class="abs" style="left:554.0px;top:16px;width:1px;height:7px;background:#3a3a3a"></div>
<span class="t" style="left:586.99px;top:0.08px;font-size:9px;line-height:12px;color:#111;">140</span>
<div class="abs" style="left:594.0px;top:16px;width:1px;height:7px;background:#3a3a3a"></div>
<span class="t" style="left:626.99px;top:0.08px;font-size:9px;line-height:12px;color:#111;">150</span>
<div class="abs" style="left:634.0px;top:16px;width:1px;height:7px;background:#3a3a3a"></div>
<span class="t" style="left:666.99px;top:0.08px;font-size:9px;line-height:12px;color:#111;">160</span>
<div class="abs" style="left:674.0px;top:16px;width:1px;height:7px;background:#3a3a3a"></div>
<span class="t" style="left:706.99px;top:0.08px;font-size:9px;line-height:12px;color:#111;">170</span>
<div class="abs" style="left:714.0px;top:16px;width:1px;height:7px;background:#3a3a3a"></div>
<span class="t" style="left:746.99px;top:0.08px;font-size:9px;line-height:12px;color:#111;">180</span>
<div class="abs" style="left:754.0px;top:16px;width:1px;height:7px;background:#3a3a3a"></div>
<span class="t" style="left:786.99px;top:0.08px;font-size:9px;line-height:12px;color:#111;">190</span>
<div class="abs" style="left:794.0px;top:16px;width:1px;height:7px;background:#3a3a3a"></div>
<span class="t" style="left:826.99px;top:0.08px;font-size:9px;line-height:12px;color:#111;">200</span>
<div class="abs" style="left:834.0px;top:16px;width:1px;height:7px;background:#3a3a3a"></div>
<span class="t" style="left:866.99px;top:0.08px;font-size:9px;line-height:12px;color:#111;">210</span>
<div class="abs" style="left:874.0px;top:16px;width:1px;height:7px;background:#3a3a3a"></div>
<span class="t" style="left:906.99px;top:0.08px;font-size:9px;line-height:12px;color:#111;">220</span>
<div class="abs" style="left:914.0px;top:16px;width:1px;height:7px;background:#3a3a3a"></div>
<span class="t" style="left:946.99px;top:0.08px;font-size:9px;line-height:12px;color:#111;">230</span>
<div class="abs" style="left:954.0px;top:16px;width:1px;height:7px;background:#3a3a3a"></div>
<span class="t" style="left:986.99px;top:0.08px;font-size:9px;line-height:12px;color:#111;">240</span>
<div class="abs" style="left:994.0px;top:16px;width:1px;height:7px;background:#3a3a3a"></div>
<span class="t" style="left:1026.99px;top:0.08px;font-size:9px;line-height:12px;color:#111;">250</span>
<div class="abs" style="left:1034.0px;top:16px;width:1px;height:7px;background:#3a3a3a"></div>
<svg class="abs" style="left:828px;top:12px" width="14" height="8" viewBox="0 0 14 8"><path d="M1.5 1 L12.5 1 L7 7.2z" fill="#000"/></svg>
</div>
<div id="vruler">
<span class="vl" style="left:1.30px;top:568.00px">-30</span>
<div class="abs" style="left:16px;top:561.0px;width:7px;height:1px;background:#3a3a3a"></div>
<span class="vl" style="left:1.30px;top:528.00px">-20</span>
<div class="abs" style="left:16px;top:521.0px;width:7px;height:1px;background:#3a3a3a"></div>
<span class="vl" style="left:1.30px;top:488.00px">-10</span>
<div class="abs" style="left:16px;top:481.0px;width:7px;height:1px;background:#3a3a3a"></div>
<span class="vl" style="left:1.30px;top:444.00px">0</span>
<div class="abs" style="left:16px;top:441.0px;width:7px;height:1px;background:#3a3a3a"></div>
<span class="vl" style="left:1.30px;top:406.51px">10</span>
<div class="abs" style="left:16px;top:401.0px;width:7px;height:1px;background:#3a3a3a"></div>
<span class="vl" style="left:1.30px;top:366.51px">20</span>
<div class="abs" style="left:16px;top:361.0px;width:7px;height:1px;background:#3a3a3a"></div>
<span class="vl" style="left:1.30px;top:326.51px">30</span>
<div class="abs" style="left:16px;top:321.0px;width:7px;height:1px;background:#3a3a3a"></div>
<span class="vl" style="left:1.30px;top:286.51px">40</span>
<div class="abs" style="left:16px;top:281.0px;width:7px;height:1px;background:#3a3a3a"></div>
<span class="vl" style="left:1.30px;top:246.51px">50</span>
<div class="abs" style="left:16px;top:241.0px;width:7px;height:1px;background:#3a3a3a"></div>
<span class="vl" style="left:1.30px;top:206.51px">60</span>
<div class="abs" style="left:16px;top:201.0px;width:7px;height:1px;background:#3a3a3a"></div>
<span class="vl" style="left:1.30px;top:166.51px">70</span>
<div class="abs" style="left:16px;top:161.0px;width:7px;height:1px;background:#3a3a3a"></div>
<span class="vl" style="left:1.30px;top:126.51px">80</span>
<div class="abs" style="left:16px;top:121.0px;width:7px;height:1px;background:#3a3a3a"></div>
<span class="vl" style="left:1.30px;top:86.51px">90</span>
<div class="abs" style="left:16px;top:81.0px;width:7px;height:1px;background:#3a3a3a"></div>
<span class="vl" style="left:1.30px;top:49.01px">100</span>
<div class="abs" style="left:16px;top:41.0px;width:7px;height:1px;background:#3a3a3a"></div>
<span class="vl" style="left:1.30px;top:8.67px">110</span>
<div class="abs" style="left:16px;top:1.0px;width:7px;height:1px;background:#3a3a3a"></div>
<svg class="abs" style="left:12px;top:394px" width="8" height="14" viewBox="0 0 8 14"><path d="M1 1.3 L1 12.7 L7.2 7z" fill="#000"/></svg>
</div>
<div id="canvas">
<svg class="abs" style="left:0;top:0" width="1044" height="577" viewBox="95 155 1044 577">
<defs>
<linearGradient id="hg" gradientUnits="userSpaceOnUse" x1="14" y1="0" x2="86" y2="0">
 <stop offset="0" stop-color="#b9b5ac"/><stop offset=".2" stop-color="#c6c2b8"/><stop offset=".5" stop-color="#b0aca3"/><stop offset=".8" stop-color="#9b978f"/><stop offset="1" stop-color="#8e8a83"/>
</linearGradient>
<linearGradient id="fg" gradientUnits="userSpaceOnUse" x1="14" y1="0" x2="58" y2="0">
 <stop offset="0" stop-color="#7d7971"/><stop offset=".28" stop-color="#bab5ab"/><stop offset=".62" stop-color="#9a968d"/><stop offset="1" stop-color="#6e6a63"/>
</linearGradient>
<linearGradient id="wg" gradientUnits="userSpaceOnUse" x1="230" y1="91" x2="226.3" y2="136">
 <stop offset="0" stop-color="#b47038"/><stop offset=".09" stop-color="#d88e50"/><stop offset=".3" stop-color="#f0a664"/><stop offset=".62" stop-color="#ea9e5a"/><stop offset=".86" stop-color="#cc8446"/><stop offset="1" stop-color="#a2622f"/>
</linearGradient>
<filter id="b1" x="-20%" y="-20%" width="140%" height="140%"><feGaussianBlur stdDeviation="1.6"/></filter>
<filter id="b2" x="-20%" y="-20%" width="140%" height="140%"><feGaussianBlur stdDeviation="3"/></filter>
<filter id="b0" x="-20%" y="-20%" width="140%" height="140%"><feGaussianBlur stdDeviation=".45"/></filter>
<clipPath id="hc"><path d="M83.5 80.7C87.5 81.2 99.7 82.7 107.5 83.8C115.3 84.9 122.6 86.2 130.2 87.2C137.8 88.2 145.2 89.0 152.8 89.5C160.4 90.0 169.1 90.0 175.5 90.0C181.9 90.0 185.7 89.6 191.4 89.6C197.1 89.6 202.7 89.8 209.5 90.0C216.3 90.2 224.6 90.7 232.2 91.1C239.8 91.5 247.2 91.8 254.8 92.2C262.4 92.6 269.9 93.1 277.5 93.6C285.1 94.0 292.6 94.5 300.2 94.9C307.8 95.4 315.2 95.9 322.8 96.3C330.4 96.7 337.9 97.0 345.5 97.2C353.1 97.4 362.7 97.6 368.2 97.7C373.7 97.8 375.9 97.6 378.5 97.8C381.1 98.0 382.2 98.1 383.6 98.7C385.0 99.3 385.9 100.3 386.6 101.6C387.3 102.8 387.7 104.1 388.0 106.2C388.3 108.3 388.5 111.0 388.4 114.0C388.3 117.0 387.8 120.8 387.4 124.0C387.0 127.2 386.5 130.2 385.9 133.0C385.3 135.8 384.8 138.7 384.0 141.0C383.2 143.3 382.4 145.3 381.2 146.6C379.9 147.9 378.4 148.5 376.5 148.8C374.6 149.1 373.3 148.5 370.0 148.3C366.7 148.1 362.8 147.9 356.8 147.5C350.8 147.1 341.8 146.4 334.2 145.7C326.6 145.0 319.1 144.2 311.5 143.4C303.9 142.7 296.4 141.9 288.8 141.2C281.2 140.4 273.8 139.7 266.2 138.9C258.6 138.1 251.1 137.3 243.5 136.6C235.9 135.8 228.4 135.2 220.8 134.4C213.2 133.7 205.8 133.1 198.2 132.1C190.6 131.1 183.1 129.8 175.5 128.5C167.9 127.2 160.4 125.8 152.8 124.6C145.2 123.4 137.8 122.2 130.2 121.2C122.6 120.2 115.3 119.2 107.5 118.7C99.7 118.2 87.5 118.3 83.5 118.2z"/></clipPath>
<path id="hdp" d="M100.0 9.0C97.6 9.6 90.3 11.3 85.5 12.8C80.7 14.3 74.6 16.5 71.0 17.9C67.4 19.3 66.4 19.9 63.8 21.4C61.2 22.8 58.3 24.6 55.6 26.6C52.9 28.6 50.1 31.2 47.6 33.5C45.1 35.8 42.8 38.1 40.5 40.6C38.2 43.1 36.0 45.9 34.0 48.6C32.0 51.3 30.2 54.0 28.5 56.8C26.8 59.5 25.1 62.4 23.9 65.1C22.7 67.8 22.0 70.3 21.1 73.1C20.2 75.9 19.3 78.3 18.7 82.1C18.1 85.9 17.7 92.3 17.3 96.0C16.9 99.7 16.5 101.6 16.3 104.0C16.1 106.4 16.0 108.7 16.0 110.5C16.0 112.3 15.8 113.2 16.5 115.0C17.2 116.8 19.1 119.1 20.1 121.3C21.1 123.5 22.0 125.8 22.5 128.3C23.0 130.8 23.0 133.9 22.9 136.4C22.8 138.9 22.3 141.4 21.6 143.5C20.9 145.6 19.7 147.3 18.7 149.0C17.7 150.7 16.3 153.0 15.8 153.8 L14.9 157.6 L14.8 173 Q15 177 18.5 178 L53.5 179 Q57.4 178.5 57.6 174 L56.8 158.6 C53.5 155 52 152.5 51.9 150.3 C51.5 146 51.6 142 52.1 138.6 C52.8 135 54 132 55.7 129.3 C58 126 61 124 64.4 122.6 C67.5 121 71 120 74.5 119.5 L83.5 118.8 L85.2 83.5 Q85.3 80 81.8 78.9 L63 75.4 C59.5 74.8 57 73.5 55.8 71.2 C54.6 68 54.4 65 54.8 62 C55.6 55 59.5 46.5 66 39 C74 30.5 86.5 23.3 101.1 19.4z"/>
<clipPath id="hdc"><use href="#hdp"/></clipPath>
<g id="hammer">
 <rect x="0" y="0" width="400" height="192" fill="#fff"/>
 <g clip-path="url(#hc)">
  <rect x="80" y="75" width="315" height="80" fill="url(#wg)"/>
  <g fill="none" stroke="#8a4a20" stroke-width=".8" opacity=".5"><path d="M101.5 83.2C103.8 83.5 110.8 84.3 115.5 84.9C120.2 85.5 124.8 86.3 129.5 86.9C134.2 87.4 138.8 87.9 143.5 88.3C148.2 88.8 152.8 89.2 157.5 89.5C162.2 89.8 166.8 90.0 171.5 90.1C176.2 90.2 180.8 90.2 185.5 90.3C190.2 90.3 194.8 90.4 199.5 90.6C204.2 90.8 208.8 91.1 213.5 91.3C218.2 91.6 222.8 91.9 227.5 92.2C232.2 92.4 236.8 92.7 241.5 92.9C246.2 93.1 250.8 93.3 255.5 93.5C260.2 93.7 267.2 94.1 269.5 94.2"/><path d="M151.5 94.7C153.8 94.8 160.8 95.3 165.5 95.6C170.1 95.9 174.8 96.1 179.5 96.3C184.1 96.5 188.8 96.5 193.5 96.7C198.1 96.9 202.8 97.1 207.5 97.4C212.1 97.7 216.8 98.0 221.5 98.3C226.1 98.6 230.8 98.9 235.5 99.2C240.1 99.5 244.8 99.8 249.5 100.1C254.1 100.4 258.8 100.7 263.5 101.0C268.1 101.2 272.8 101.5 277.5 101.8C282.1 102.1 286.8 102.3 291.5 102.6C296.1 102.8 300.8 103.1 305.5 103.3C310.1 103.5 317.1 103.9 319.5 104.0"/><path d="M162.9 97.9C165.3 98.0 172.3 98.5 176.9 98.6C181.6 98.7 186.3 98.6 190.9 98.7C195.6 98.7 200.3 98.9 204.9 99.0C209.6 99.1 214.3 99.3 218.9 99.4C223.6 99.5 228.3 99.7 232.9 99.9C237.6 100.0 242.3 100.2 246.9 100.4C251.6 100.6 256.3 100.8 260.9 101.1C265.6 101.4 270.3 101.7 274.9 102.1C279.6 102.4 286.6 103.0 288.9 103.2"/><path d="M197.7 102.5C200.0 102.6 207.0 103.0 211.7 103.2C216.4 103.5 221.0 103.8 225.7 104.1C230.4 104.3 235.0 104.6 239.7 104.8C244.4 105.0 249.0 105.2 253.7 105.5C258.4 105.7 265.4 106.1 267.7 106.2"/><path d="M161.5 102.0C163.8 102.1 170.8 102.5 175.5 102.7C180.2 102.8 184.8 102.7 189.5 102.8C194.2 102.8 198.8 103.0 203.5 103.1C208.2 103.2 212.8 103.4 217.5 103.5C222.2 103.7 226.8 103.9 231.5 104.1C236.2 104.4 240.8 104.6 245.5 104.9C250.2 105.2 254.8 105.5 259.5 105.8C264.2 106.2 268.8 106.6 273.5 107.0C278.2 107.5 282.8 107.9 287.5 108.4C292.2 108.8 296.8 109.3 301.5 109.7C306.2 110.2 310.8 110.7 315.5 111.2C320.2 111.6 324.8 112.1 329.5 112.5C334.2 112.8 341.2 113.3 343.5 113.5"/><path d="M151.3 101.3C153.6 101.5 160.6 102.0 165.3 102.3C169.9 102.7 174.6 103.0 179.3 103.4C183.9 103.7 188.6 104.0 193.3 104.3C197.9 104.7 202.6 105.2 207.3 105.6C211.9 106.1 216.6 106.6 221.3 107.0C225.9 107.5 230.6 108.0 235.3 108.4C239.9 108.8 244.6 109.2 249.3 109.6C253.9 110.0 258.6 110.3 263.3 110.7C267.9 111.0 274.9 111.4 277.3 111.5"/><path d="M165.4 103.3C167.7 103.4 174.7 104.0 179.4 104.3C184.0 104.7 188.7 104.9 193.4 105.2C198.0 105.6 202.7 106.0 207.4 106.4C212.0 106.8 216.7 107.3 221.4 107.7C226.0 108.1 230.7 108.6 235.4 109.0C240.0 109.5 244.7 109.9 249.4 110.3C254.0 110.7 258.7 111.1 263.4 111.5C268.0 111.9 272.7 112.3 277.4 112.7C282.0 113.0 286.7 113.4 291.4 113.7C296.0 113.9 300.7 114.2 305.4 114.5C310.0 114.7 314.7 115.0 319.4 115.2C324.0 115.4 331.0 115.7 333.4 115.8"/><path d="M112.7 100.9C115.1 101.2 122.1 102.1 126.7 102.6C131.4 103.2 136.1 103.7 140.7 104.2C145.4 104.8 150.1 105.3 154.7 105.8C159.4 106.3 164.1 106.7 168.7 107.1C173.4 107.5 178.1 107.8 182.7 108.2C187.4 108.6 192.1 109.0 196.7 109.3C201.4 109.7 206.1 110.0 210.7 110.4C215.4 110.8 220.1 111.2 224.7 111.6C229.4 112.0 236.4 112.5 238.7 112.7"/><path d="M101.5 102.9C103.8 103.1 110.8 103.8 115.5 104.4C120.2 105.0 124.8 105.7 129.5 106.4C134.2 107.0 138.8 107.8 143.5 108.4C148.2 109.1 152.8 109.7 157.5 110.3C162.2 110.9 166.8 111.5 171.5 112.0C176.2 112.5 183.2 113.1 185.5 113.3"/><path d="M84.5 103.0C86.8 103.2 93.8 103.9 98.5 104.3C103.1 104.8 107.8 105.2 112.5 105.7C117.1 106.2 121.8 106.9 126.5 107.4C131.1 107.9 135.8 108.3 140.5 108.8C145.1 109.2 149.8 109.7 154.5 110.1C159.1 110.5 163.8 110.8 168.5 111.2C173.1 111.6 177.8 112.1 182.5 112.5C187.1 113.0 191.8 113.5 196.5 114.0C201.1 114.5 208.1 115.3 210.5 115.5"/><path d="M129.5 110.0C131.8 110.3 138.8 111.1 143.5 111.7C148.2 112.3 152.8 112.8 157.5 113.4C162.2 113.9 166.8 114.5 171.5 115.0C176.2 115.5 180.8 116.0 185.5 116.5C190.2 116.9 194.8 117.5 199.5 118.0C204.2 118.4 208.8 118.8 213.5 119.2C218.2 119.6 222.8 120.1 227.5 120.5C232.2 121.0 236.8 121.4 241.5 121.9C246.2 122.3 253.2 123.1 255.5 123.3"/><path d="M102.8 108.2C105.2 108.4 112.2 109.0 116.8 109.4C121.5 109.9 126.2 110.5 130.8 111.1C135.5 111.6 140.2 112.3 144.8 112.9C149.5 113.5 154.2 114.1 158.8 114.7C163.5 115.3 168.2 115.9 172.8 116.4C177.5 117.0 182.2 117.4 186.8 117.9C191.5 118.4 196.2 119.0 200.8 119.5C205.5 119.9 212.5 120.5 214.8 120.7"/><path d="M87.0 108.8C89.3 109.0 96.3 109.3 101.0 109.7C105.6 110.0 110.3 110.5 115.0 111.0C119.6 111.5 124.3 112.2 129.0 112.8C133.6 113.4 138.3 114.1 143.0 114.7C147.6 115.4 152.3 116.0 157.0 116.6C161.6 117.2 166.3 117.9 171.0 118.4C175.6 119.0 180.3 119.5 185.0 120.0C189.6 120.5 194.3 121.0 199.0 121.4C203.6 121.8 208.3 122.1 213.0 122.4C217.6 122.8 222.3 123.2 227.0 123.5C231.6 123.9 236.3 124.2 241.0 124.6C245.6 125.0 250.3 125.4 255.0 125.8C259.6 126.2 264.3 126.6 269.0 127.1C273.6 127.5 280.6 128.2 283.0 128.4"/><path d="M98.2 110.6C100.6 110.7 107.6 111.0 112.2 111.3C116.9 111.7 121.6 112.2 126.2 112.8C130.9 113.3 135.6 114.0 140.2 114.6C144.9 115.3 149.6 116.0 154.2 116.7C158.9 117.4 163.6 118.1 168.2 118.9C172.9 119.6 177.6 120.3 182.2 121.0C186.9 121.7 191.6 122.4 196.2 123.0C200.9 123.6 205.6 124.0 210.2 124.5C214.9 125.0 219.6 125.5 224.2 125.9C228.9 126.3 233.6 126.7 238.2 127.1C242.9 127.5 247.6 127.8 252.2 128.2C256.9 128.5 261.6 128.8 266.2 129.2C270.9 129.5 275.6 129.8 280.2 130.2C284.9 130.5 291.9 131.0 294.2 131.1"/><path d="M110.3 118.3C112.6 118.5 119.6 119.2 124.3 119.8C129.0 120.4 133.6 121.0 138.3 121.7C143.0 122.4 147.6 123.1 152.3 123.9C157.0 124.6 161.6 125.5 166.3 126.3C171.0 127.1 175.6 127.9 180.3 128.7C185.0 129.5 189.6 130.3 194.3 131.0C199.0 131.6 203.6 132.2 208.3 132.7C213.0 133.2 217.6 133.7 222.3 134.2C227.0 134.7 231.6 135.1 236.3 135.6C241.0 136.1 248.0 136.8 250.3 137.0"/><path d="M286.1 107.5C288.6 107.8 295.8 108.5 300.7 108.9C305.5 109.4 312.8 109.8 315.2 110.0"/><path d="M191.4 126.7C192.5 126.8 195.7 127.3 197.8 127.6C199.9 127.8 203.2 128.1 204.2 128.2"/><path d="M346.2 127.3C348.4 127.5 355.0 127.9 359.4 128.2C363.8 128.4 370.5 128.8 372.7 128.9"/><path d="M276.9 100.0C279.2 100.2 286.2 100.6 290.9 100.9C295.6 101.2 302.6 101.5 304.9 101.6"/><path d="M314.1 106.4C315.3 106.5 319.2 107.0 321.7 107.1C324.3 107.2 328.1 107.0 329.4 107.0"/><path d="M359.6 118.0C361.6 118.0 367.6 118.3 371.6 118.4C375.6 118.4 381.6 118.3 383.6 118.3"/><path d="M319.1 137.5C320.0 137.6 322.8 138.0 324.7 138.2C326.6 138.3 329.4 138.4 330.3 138.4"/><path d="M244.6 107.9C245.5 108.1 248.2 108.8 250.0 109.0C251.8 109.2 254.5 109.1 255.4 109.1"/><path d="M355.8 123.9C357.3 123.9 361.7 124.2 364.6 124.2C367.5 124.3 371.9 124.1 373.4 124.1"/><path d="M170.7 100.6C171.8 100.6 175.1 100.6 177.3 100.7C179.5 100.8 182.9 101.0 184.0 101.0"/><path d="M349.0 105.9C350.3 106.0 354.3 106.2 356.9 106.3C359.5 106.4 363.5 106.7 364.8 106.8"/><path d="M351.2 118.7C352.8 118.8 357.6 119.1 360.7 119.1C363.9 119.2 368.7 119.1 370.3 119.1"/><path d="M138.9 103.7C139.6 103.7 141.6 103.6 143.0 103.7C144.3 103.8 146.3 104.3 147.0 104.5"/><path d="M246.8 123.3C248.1 123.4 251.9 123.8 254.4 124.0C256.9 124.3 260.7 124.7 262.0 124.9"/><path d="M247.9 98.6C249.0 98.7 252.4 99.2 254.7 99.4C256.9 99.6 260.3 99.6 261.4 99.6"/><path d="M305.6 121.6C308.0 121.8 315.0 122.5 319.7 122.9C324.4 123.3 331.4 123.7 333.7 123.9"/><path d="M286.2 118.0C287.7 118.2 292.2 118.4 295.2 118.7C298.2 119.0 302.7 119.6 304.2 119.8"/><path d="M339.3 130.0C341.7 130.1 348.9 130.7 353.7 131.1C358.5 131.5 365.7 132.0 368.0 132.1"/><path d="M125.6 113.8C126.5 113.8 129.2 113.9 131.0 114.1C132.7 114.3 135.4 114.9 136.3 115.0"/><path d="M279.5 99.8C281.6 99.9 287.9 99.8 292.1 100.0C296.3 100.3 302.6 101.1 304.7 101.3"/><path d="M127.3 109.0C129.6 109.2 136.5 109.6 141.0 110.2C145.6 110.8 152.5 112.2 154.7 112.6"/><path d="M226.8 109.2C229.3 109.3 236.7 109.4 241.7 109.7C246.7 110.0 254.1 110.8 256.6 111.0"/><path d="M184.0 110.2C185.0 110.3 188.1 110.9 190.2 111.0C192.2 111.1 195.3 111.0 196.3 110.9"/><path d="M213.3 113.8C214.0 113.9 216.1 114.3 217.5 114.4C218.9 114.5 221.0 114.6 221.7 114.6"/><path d="M370.7 104.0C372.8 104.2 380.5 104.8 383.4 105.4C386.2 106.0 387.2 107.2 388.0 107.6"/><path d="M311.1 99.8C312.3 99.9 315.8 100.3 318.1 100.5C320.4 100.8 323.9 101.2 325.1 101.3"/><path d="M160.7 118.3C161.7 118.4 164.5 118.6 166.4 118.8C168.3 119.1 171.1 119.6 172.0 119.7"/><path d="M102.6 88.0C104.6 88.2 110.3 88.7 114.2 89.3C118.1 89.9 123.8 91.2 125.8 91.6"/><path d="M317.7 126.0C318.5 125.9 321.0 125.6 322.6 125.8C324.2 125.9 326.7 126.6 327.5 126.8"/><path d="M184.0 108.5C185.7 108.6 190.7 108.5 194.1 108.7C197.5 108.8 202.5 109.2 204.2 109.3"/><path d="M154.9 107.8C155.8 107.9 158.4 108.1 160.1 108.3C161.8 108.4 164.4 108.8 165.3 108.9"/><path d="M174.1 102.6C176.2 102.7 182.4 103.1 186.5 103.3C190.6 103.5 196.8 103.6 198.9 103.7"/><path d="M91.2 94.7C92.4 94.9 95.8 95.6 98.0 95.9C100.3 96.2 103.6 96.3 104.8 96.3"/><path d="M223.2 100.3C225.6 100.6 232.7 101.4 237.5 101.7C242.2 102.1 249.4 102.2 251.8 102.3"/><path d="M327.2 120.5C328.6 120.6 332.8 121.0 335.5 121.2C338.3 121.5 342.5 121.8 343.9 122.0"/><path d="M326.5 114.1C328.5 114.2 334.4 114.4 338.3 114.6C342.2 114.8 348.1 115.0 350.1 115.1"/><path d="M123.5 90.1C124.3 90.1 126.7 90.3 128.3 90.4C129.9 90.5 132.3 90.8 133.1 90.9"/><path d="M329.1 103.2C331.4 103.3 338.2 103.4 342.7 103.5C347.2 103.7 354.0 103.9 356.3 104.0"/><path d="M218.8 104.3C219.7 104.3 222.6 104.3 224.5 104.5C226.4 104.7 229.3 105.3 230.2 105.5"/><path d="M244.1 133.3C245.2 133.3 248.6 133.2 250.8 133.4C253.0 133.5 256.4 133.9 257.5 134.1"/><path d="M196.3 92.3C197.8 92.3 202.4 92.2 205.5 92.3C208.6 92.4 213.2 92.8 214.7 92.9"/><path d="M162.3 92.0C163.2 92.0 165.7 91.9 167.3 91.9C169.0 91.9 171.5 92.0 172.3 92.0"/><path d="M153.3 101.1C155.0 101.2 160.2 101.7 163.7 102.0C167.2 102.2 172.4 102.5 174.2 102.6"/><path d="M340.1 130.8C341.4 131.0 345.6 131.7 348.3 131.9C351.1 132.0 355.2 131.7 356.6 131.7"/><path d="M271.9 125.8C272.6 125.8 274.9 126.1 276.4 126.2C277.9 126.3 280.1 126.4 280.9 126.4"/><path d="M320.7 130.2C321.7 130.3 324.4 130.4 326.3 130.6C328.1 130.8 330.9 131.2 331.8 131.4"/><path d="M324.8 133.8C326.6 134.0 331.8 134.3 335.3 134.6C338.7 134.8 343.9 135.2 345.7 135.3"/><path d="M95.0 91.6C95.9 91.6 98.6 91.7 100.5 91.9C102.3 92.2 105.0 92.9 105.9 93.1"/><path d="M267.4 118.5C269.2 118.6 274.7 119.1 278.3 119.3C281.9 119.5 287.4 119.7 289.2 119.8"/><path d="M302.2 131.2C303.8 131.4 308.6 132.0 311.8 132.2C315.0 132.4 319.7 132.5 321.3 132.6"/><path d="M158.9 115.0C159.7 115.1 162.1 115.7 163.7 115.9C165.3 116.1 167.7 116.1 168.5 116.1"/><path d="M368.0 133.5C369.6 133.5 374.3 134.1 377.4 133.6C380.6 133.1 385.3 131.0 386.9 130.5"/><path d="M264.3 126.2C266.2 126.4 271.7 126.9 275.4 127.3C279.1 127.6 284.6 128.2 286.4 128.3"/><path d="M174.0 116.9C175.7 117.1 180.8 117.7 184.2 118.1C187.6 118.5 192.8 119.1 194.5 119.4"/><path d="M286.0 124.4C287.9 124.6 293.7 125.2 297.5 125.6C301.3 125.9 307.0 126.3 308.9 126.5"/><path d="M120.2 101.6C122.6 102.0 129.5 103.4 134.1 104.1C138.7 104.7 145.6 105.5 147.9 105.7"/><path d="M218.6 94.1C220.8 94.2 227.3 94.2 231.7 94.4C236.0 94.5 242.5 94.8 244.7 94.9"/><path d="M359.3 109.8C360.3 109.8 363.5 109.6 365.6 109.7C367.7 109.7 370.9 110.1 371.9 110.2"/><path d="M124.3 117.1C126.5 117.4 133.0 118.5 137.3 119.1C141.7 119.7 148.2 120.6 150.4 120.8"/><path d="M345.4 109.8C347.0 109.9 351.7 110.0 354.8 110.2C357.9 110.3 362.6 110.8 364.1 110.9"/><path d="M173.3 107.3C174.2 107.3 177.0 107.4 178.8 107.6C180.7 107.8 183.4 108.3 184.4 108.4"/><path d="M303.0 97.7C305.2 97.9 311.8 98.8 316.2 99.2C320.6 99.5 327.2 99.6 329.4 99.7"/><path d="M169.8 121.9C171.1 122.2 175.2 123.2 177.9 123.6C180.6 124.0 184.6 124.2 186.0 124.3"/><path d="M209.7 106.0C210.9 106.1 214.4 106.2 216.7 106.5C219.1 106.8 222.6 107.4 223.8 107.6"/><path d="M356.4 112.8C357.5 112.9 360.9 113.2 363.1 113.3C365.4 113.3 368.7 113.2 369.9 113.2"/><path d="M362.3 117.4C364.6 117.4 371.8 117.5 376.1 117.7C380.3 117.8 386.0 118.1 388.0 118.2"/><path d="M244.7 131.3C246.7 131.6 252.7 132.6 256.6 133.0C260.6 133.4 266.6 133.8 268.6 133.9"/><path d="M272.3 126.3C273.4 126.5 277.0 127.4 279.4 127.7C281.8 127.9 285.4 127.7 286.6 127.7"/><path d="M185.3 109.1C186.5 109.2 190.2 109.7 192.6 109.8C195.0 109.9 198.7 109.8 199.9 109.8"/><path d="M172.9 114.2C174.6 114.3 179.7 114.7 183.1 115.0C186.4 115.3 191.5 115.8 193.2 115.9"/></g>
  <g fill="none" stroke="#7a3f1a" stroke-width=".9" opacity=".24"><path d="M205.0 105.4C199.9 105.4 182.5 105.3 174.3 105.2C166.1 105.1 160.0 104.8 156.0 104.8C151.9 104.8 150.0 104.7 150.0 104.9C150.0 105.2 151.9 105.6 156.0 106.4C160.0 107.1 166.1 108.1 174.3 109.2C182.5 110.3 199.9 112.3 205.0 113.0"/><path d="M195.0 101.7C189.9 101.9 172.5 102.5 164.3 102.7C156.1 103.0 150.0 102.9 146.0 103.0C141.9 103.2 140.0 103.2 140.0 103.7C140.0 104.2 141.9 104.8 146.0 105.9C150.0 106.9 156.1 108.3 164.3 109.9C172.5 111.5 189.9 114.4 195.0 115.4"/><path d="M185.0 98.3C179.9 98.7 162.5 99.9 154.3 100.4C146.1 100.9 140.0 100.8 136.0 101.2C131.9 101.5 130.0 101.8 130.0 102.5C130.0 103.2 131.9 103.9 136.0 105.3C140.0 106.6 146.1 108.4 154.3 110.5C162.5 112.5 179.9 116.3 185.0 117.4"/><path d="M290.0 115.6C284.9 115.5 267.5 115.1 259.3 115.0C251.1 114.9 245.0 115.0 241.0 115.1C236.9 115.2 235.0 115.4 235.0 115.7C235.0 116.1 236.9 116.5 241.0 117.3C245.0 118.0 251.1 119.0 259.3 120.3C267.5 121.5 284.9 124.0 290.0 124.7"/><path d="M280.0 111.0C274.9 111.2 257.5 111.6 249.3 112.0C241.1 112.4 235.0 112.9 231.0 113.4C226.9 114.0 225.0 114.3 225.0 115.0C225.0 115.6 226.9 116.3 231.0 117.4C235.0 118.5 241.1 120.0 249.3 121.7C257.5 123.4 274.9 126.7 280.0 127.7"/><path d="M270.0 106.5C264.9 106.9 247.5 108.1 239.3 109.0C231.1 109.9 225.0 111.0 221.0 111.8C216.9 112.7 215.0 113.3 215.0 114.2C215.0 115.2 216.9 116.1 221.0 117.5C225.0 119.0 231.1 120.9 239.3 123.1C247.5 125.2 264.9 129.3 270.0 130.6"/><path d="M365.0 114.4C359.9 114.4 342.5 114.6 334.3 114.7C326.1 114.8 320.0 114.8 316.0 115.0C311.9 115.1 310.0 115.2 310.0 115.6C310.0 115.9 311.9 116.4 316.0 117.1C320.0 117.8 326.1 118.9 334.3 119.9C342.5 120.9 359.9 122.6 365.0 123.2"/><path d="M355.0 110.3C349.9 110.6 332.5 111.4 324.3 111.9C316.1 112.5 310.0 112.8 306.0 113.3C301.9 113.8 300.0 114.2 300.0 114.8C300.0 115.4 301.9 116.1 306.0 117.2C310.0 118.3 316.1 119.8 324.3 121.4C332.5 122.9 349.9 125.6 355.0 126.5"/><path d="M345.0 106.2C339.9 106.7 322.5 108.2 314.3 109.1C306.1 110.0 300.0 110.9 296.0 111.7C291.9 112.5 290.0 113.1 290.0 114.1C290.0 115.0 291.9 115.9 296.0 117.3C300.0 118.7 306.1 120.7 314.3 122.7C322.5 124.8 339.9 128.5 345.0 129.6"/><path d="M255.0 103.5C249.9 103.3 232.5 102.7 224.3 102.5C216.1 102.3 210.0 102.2 206.0 102.2C201.9 102.2 200.0 102.4 200.0 102.5C200.0 102.7 201.9 102.9 206.0 103.4C210.0 103.8 216.1 104.5 224.3 105.3C232.5 106.1 249.9 107.8 255.0 108.3"/><path d="M245.0 100.8C239.9 100.8 222.5 100.7 214.3 100.7C206.1 100.8 200.0 101.1 196.0 101.3C191.9 101.5 190.0 101.6 190.0 102.0C190.0 102.3 191.9 102.7 196.0 103.3C200.0 104.0 206.1 104.8 214.3 105.8C222.5 106.9 239.9 109.0 245.0 109.6"/><path d="M235.0 98.3C229.9 98.4 212.5 98.7 204.3 99.1C196.1 99.4 190.0 100.0 186.0 100.4C181.9 100.9 180.0 101.2 180.0 101.7C180.0 102.2 181.9 102.5 186.0 103.3C190.0 104.1 196.1 105.1 204.3 106.4C212.5 107.7 229.9 110.2 235.0 110.9"/><path d="M388.0 123.9C384.9 124.4 375.5 126.4 369.3 126.9C363.1 127.5 355.0 127.1 351.0 127.3C346.9 127.4 345.0 127.5 345.0 127.8C345.0 128.1 346.9 128.5 351.0 129.0C355.0 129.6 363.1 131.2 369.3 131.2C375.5 131.2 384.9 129.5 388.0 129.1"/><path d="M388.0 121.7C383.2 122.2 367.1 124.0 359.3 124.7C351.5 125.4 345.0 125.5 341.0 125.9C336.9 126.3 335.0 126.6 335.0 127.2C335.0 127.7 336.9 128.2 341.0 129.1C345.0 130.0 351.5 132.1 359.3 132.5C367.1 132.9 383.2 131.6 388.0 131.4"/><path d="M380.0 119.2C374.9 119.7 357.5 121.5 349.3 122.4C341.1 123.3 335.0 123.9 331.0 124.5C326.9 125.2 325.0 125.6 325.0 126.4C325.0 127.2 326.9 127.9 331.0 129.2C335.0 130.4 341.1 132.4 349.3 133.7C357.5 135.1 374.9 136.7 380.0 137.3"/></g>
  <g fill="none" stroke="#f0bd84" stroke-width="1" opacity=".4"><path d="M88.3 83.4C90.7 83.7 97.7 84.4 102.3 85.0C107.0 85.5 111.7 86.2 116.3 86.8C121.0 87.4 125.7 88.2 130.3 88.8C135.0 89.4 139.7 89.9 144.3 90.3C149.0 90.8 153.7 91.2 158.3 91.5C163.0 91.8 167.7 91.9 172.3 92.1C177.0 92.2 181.7 92.1 186.3 92.2C191.0 92.2 195.7 92.3 200.3 92.5C205.0 92.7 212.0 93.0 214.3 93.1"/><path d="M109.9 87.1C112.2 87.4 119.2 88.3 123.9 88.8C128.6 89.3 133.2 89.8 137.9 90.3C142.6 90.8 147.2 91.3 151.9 91.6C156.6 92.0 161.2 92.0 165.9 92.2C170.6 92.4 175.2 92.5 179.9 92.6C184.6 92.8 189.2 92.7 193.9 92.9C198.6 93.0 203.2 93.3 207.9 93.6C212.6 93.9 217.2 94.3 221.9 94.7C226.6 95.0 231.2 95.4 235.9 95.7C240.6 96.0 245.2 96.3 249.9 96.5C254.6 96.8 261.6 97.3 263.9 97.4"/><path d="M183.6 94.6C185.9 94.7 192.9 94.8 197.6 95.0C202.2 95.2 206.9 95.4 211.6 95.6C216.2 95.9 220.9 96.2 225.6 96.5C230.2 96.8 234.9 97.0 239.6 97.3C244.2 97.5 248.9 97.7 253.6 98.0C258.2 98.3 262.9 98.5 267.6 98.8C272.2 99.1 279.2 99.5 281.6 99.6"/><path d="M165.1 98.6C167.4 98.8 174.4 99.3 179.1 99.6C183.8 99.9 188.4 100.1 193.1 100.4C197.8 100.7 202.4 101.1 207.1 101.5C211.8 101.9 216.4 102.3 221.1 102.6C225.8 102.9 230.4 103.2 235.1 103.4C239.8 103.7 244.4 103.8 249.1 104.0C253.8 104.2 260.8 104.5 263.1 104.5"/><path d="M86.6 97.8C89.0 98.0 96.0 98.4 100.6 98.8C105.3 99.2 110.0 99.7 114.6 100.2C119.3 100.7 124.0 101.4 128.6 101.9C133.3 102.5 138.0 103.1 142.6 103.6C147.3 104.1 152.0 104.7 156.6 105.2C161.3 105.6 166.0 106.0 170.6 106.4C175.3 106.8 180.0 107.0 184.6 107.4C189.3 107.7 194.0 108.1 198.6 108.4C203.3 108.7 210.3 109.2 212.6 109.4"/><path d="M179.0 111.2C181.4 111.4 188.4 112.0 193.0 112.4C197.7 112.7 202.4 113.1 207.0 113.4C211.7 113.7 216.4 114.0 221.0 114.3C225.7 114.6 230.4 114.9 235.0 115.2C239.7 115.4 244.4 115.7 249.0 115.9C253.7 116.2 258.4 116.5 263.0 116.8C267.7 117.1 272.4 117.4 277.0 117.7C281.7 118.1 286.4 118.4 291.0 118.7C295.7 119.1 300.4 119.4 305.0 119.8C309.7 120.2 314.4 120.6 319.0 121.1C323.7 121.5 328.4 121.9 333.0 122.3C337.7 122.7 342.4 123.1 347.0 123.4C351.7 123.8 356.4 124.1 361.0 124.4C365.7 124.7 372.7 125.1 375.0 125.2"/><path d="M155.6 112.9C158.0 113.2 165.0 114.2 169.6 114.8C174.3 115.3 179.0 115.7 183.6 116.1C188.3 116.5 193.0 116.8 197.6 117.1C202.3 117.3 207.0 117.4 211.6 117.5C216.3 117.7 221.0 117.9 225.6 118.1C230.3 118.3 235.0 118.6 239.6 118.9C244.3 119.2 249.0 119.6 253.6 120.1C258.3 120.5 263.0 121.1 267.6 121.7C272.3 122.2 277.0 122.9 281.6 123.4C286.3 124.0 291.0 124.7 295.6 125.2C300.3 125.8 305.0 126.3 309.6 126.8C314.3 127.2 321.3 127.8 323.6 128.0"/><path d="M123.7 114.6C126.1 114.9 133.1 115.8 137.7 116.4C142.4 117.0 147.1 117.7 151.7 118.3C156.4 119.0 161.1 119.6 165.7 120.3C170.4 120.9 175.1 121.5 179.7 122.1C184.4 122.7 189.1 123.3 193.7 123.8C198.4 124.3 203.1 124.7 207.7 125.1C212.4 125.5 219.4 126.0 221.7 126.2"/><path d="M101.0 113.1C103.3 113.4 110.3 114.0 115.0 114.6C119.7 115.2 124.3 115.9 129.0 116.7C133.7 117.4 138.3 118.3 143.0 119.1C147.7 119.8 152.3 120.6 157.0 121.3C161.7 121.9 166.3 122.6 171.0 123.2C175.7 123.8 180.3 124.2 185.0 124.7C189.7 125.2 194.3 125.7 199.0 126.1C203.7 126.5 208.3 126.7 213.0 127.1C217.7 127.5 222.3 127.9 227.0 128.4C231.7 128.9 238.7 129.7 241.0 130.0"/><path d="M114.3 115.5C116.6 115.8 123.6 116.7 128.3 117.4C133.0 118.1 137.6 119.0 142.3 119.8C147.0 120.6 151.6 121.5 156.3 122.3C161.0 123.2 165.6 124.1 170.3 124.9C175.0 125.7 179.6 126.5 184.3 127.2C189.0 127.9 193.6 128.6 198.3 129.2C203.0 129.7 207.6 129.9 212.3 130.2C217.0 130.6 224.0 131.0 226.3 131.2"/><path d="M109.9 115.8C112.2 116.1 119.2 116.9 123.9 117.6C128.5 118.3 133.2 119.1 137.9 119.9C142.5 120.7 147.2 121.7 151.9 122.6C156.5 123.5 161.2 124.5 165.9 125.3C170.5 126.2 175.2 127.0 179.9 127.7C184.5 128.4 189.2 129.1 193.9 129.6C198.5 130.1 203.2 130.4 207.9 130.7C212.5 131.0 217.2 131.2 221.9 131.5C226.5 131.7 231.2 132.0 235.9 132.3C240.5 132.6 245.2 133.0 249.9 133.4C254.5 133.9 259.2 134.4 263.9 135.0C268.5 135.5 273.2 136.2 277.9 136.8C282.5 137.4 287.2 138.1 291.9 138.8C296.5 139.4 303.5 140.3 305.9 140.6"/></g>
  <path d="M83 79 L90.5 80.5 C89 95 89 108 90.5 121.5 L83 120z" fill="#5f3617" opacity=".3"/>
  <path d="M374 95 L392 95 L392 152 L370 152 C380 140 383 110 374 95z" fill="#5f3617" opacity=".25" filter="url(#b1)"/>
 </g>
 <use href="#hdp" fill="url(#hg)"/>
 <g clip-path="url(#hdc)">
  <path d="M62 75 L87 78 L86 120 L64 124 C58 110 58 90 62 75z" fill="#66625b" opacity=".28" filter="url(#b2)"/>
  <path d="M17 112 L30 120 L30.5 139 L28.4 149 L18 156z M46 122 L60 120 L52 131 L50 150 L58 159 L41.4 150.6 L42 140z" fill="#4a4741" opacity=".5" filter="url(#b0)"/>
  <path d="M28 96 C26 104 28 112 29.8 119.7 L30.3 138.8 L28.2 148.8 L41.2 150.5 L41.8 140.3 L45.7 121.7 C48 112 48 104 46 96z" fill="#c4c0b6" opacity=".55" filter="url(#b0)"/>
  <path d="M100 11 C80 15.5 58 26.5 41.5 43.5 C30.5 57.5 23.5 76 21 96 C20.3 104 20.8 110 22.8 116 L35 112 C33 100 35 84 41 70 C46 58 53 47 62 38.5 C72 29 86 21 100.5 16z" fill="#c6c1b6" opacity=".8" filter="url(#b1)"/>
  <use href="#hdp" fill="none" stroke="#3b3833" stroke-width="3.4" opacity=".36" filter="url(#b1)"/>
  <path d="M101.1 19.4 C86.5 23.3 74 30.5 66 39 C59.5 46.5 55.6 55 54.8 62 C54.4 65 54.6 68 55.8 71.2 C54 72.5 52.4 73 50.6 72.6 C49.6 69 49.4 65.5 49.8 62 C51.5 52.5 56.5 43.5 63 36.5 C72 27.3 86 19.3 100.5 14.8z" fill="#34302a" opacity=".9" filter="url(#b0)"/>
  <path d="M100.8 17.2 C86 21.3 73.5 28.3 64.8 37 C58 44.5 53.5 53.5 52.2 62 C51.8 65 52 68 52.8 71" fill="none" stroke="#807c72" stroke-width=".7" opacity=".7"/>
  <use href="#hdp" fill="none" stroke="#55514a" stroke-width="1.2" opacity=".65"/>
 </g>
 <path d="M15.7 155.4 L14.8 173 Q15 177 18.5 178 L53.5 179 Q57.4 178.5 57.6 174 L56.8 158.6 L55.5 157.2z" fill="url(#fg)"/>
 <path d="M15.7 155.4 L56.8 158.6 L56.9 160.6 L15.6 157.6z" fill="#5f5b54" opacity=".55"/>
 <path d="M14.9 171.5 L57.5 172.6 L57.6 174 Q57.4 178.5 53.5 179 L18.5 178 Q15 177 14.8 173z" fill="#5f5b54" opacity=".35"/>
</g>

<radialGradient id="lens" cx=".5" cy=".5" r=".5"><stop offset="0" stop-color="#b8cce8" stop-opacity="0"/><stop offset=".77" stop-color="#b8cce8" stop-opacity="0"/><stop offset=".81" stop-color="#b8cce8" stop-opacity=".3"/><stop offset=".9" stop-color="#a9c0e0" stop-opacity=".4"/><stop offset=".97" stop-color="#9db6da" stop-opacity=".34"/><stop offset="1" stop-color="#8fa8cc" stop-opacity="0"/></radialGradient>
</defs>
<rect x="95" y="155" width="1044" height="577" fill="#000"/>
<use href="#hammer" x="0" y="0" transform="translate(187 324)"/>
<g transform="translate(187 324)"><path d="M83.5 80.7C87.5 81.2 99.7 82.7 107.5 83.8C115.3 84.9 122.6 86.2 130.2 87.2C137.8 88.2 145.2 89.0 152.8 89.5C160.4 90.0 169.1 90.0 175.5 90.0C181.9 90.0 185.7 89.6 191.4 89.6C197.1 89.6 202.7 89.8 209.5 90.0C216.3 90.2 224.6 90.7 232.2 91.1C239.8 91.5 247.2 91.8 254.8 92.2C262.4 92.6 269.9 93.1 277.5 93.6C285.1 94.0 292.6 94.5 300.2 94.9C307.8 95.4 315.2 95.9 322.8 96.3C330.4 96.7 337.9 97.0 345.5 97.2C353.1 97.4 362.7 97.6 368.2 97.7C373.7 97.8 375.9 97.6 378.5 97.8C381.1 98.0 382.2 98.1 383.6 98.7C385.0 99.3 385.9 100.3 386.6 101.6C387.3 102.8 387.7 104.1 388.0 106.2C388.3 108.3 388.5 111.0 388.4 114.0C388.3 117.0 387.8 120.8 387.4 124.0C387.0 127.2 386.5 130.2 385.9 133.0C385.3 135.8 384.8 138.7 384.0 141.0C383.2 143.3 382.4 145.3 381.2 146.6C379.9 147.9 378.4 148.5 376.5 148.8C374.6 149.1 373.3 148.5 370.0 148.3C366.7 148.1 362.8 147.9 356.8 147.5C350.8 147.1 341.8 146.4 334.2 145.7C326.6 145.0 319.1 144.2 311.5 143.4C303.9 142.7 296.4 141.9 288.8 141.2C281.2 140.4 273.8 139.7 266.2 138.9C258.6 138.1 251.1 137.3 243.5 136.6C235.9 135.8 228.4 135.2 220.8 134.4C213.2 133.7 205.8 133.1 198.2 132.1C190.6 131.1 183.1 129.8 175.5 128.5C167.9 127.2 160.4 125.8 152.8 124.6C145.2 123.4 137.8 122.2 130.2 121.2C122.6 120.2 115.3 119.2 107.5 118.7C99.7 118.2 87.5 118.3 83.5 118.2z" fill="#8d5003" opacity=".3"/><use href="#hdp" fill="#3a3833" opacity=".28"/></g>
<rect x="187" y="324" width="400" height="192" fill="none" stroke="#ff8c8c" stroke-opacity=".35" stroke-width="1"/>
<g opacity=".5"><use href="#hammer" transform="translate(44.82 400.16) rotate(-7.48) scale(2.15)"/></g>
<rect x="0" y="0" width="400" height="192" fill="none" stroke="#ff6a6a" stroke-opacity=".3" stroke-width=".45" transform="translate(44.82 400.16) rotate(-7.48) scale(2.15)"/>
<g stroke="#ffffff" stroke-opacity=".075" stroke-width="1">
<path d="M106.5 155V732"/>
<path d="M506.5 155V732"/>
<path d="M95 196.5H1139"/>
<path d="M95 596.5H1139"/>
</g>
<path d="M106 716h1v1h-1zM106 676h1v1h-1zM106 636h1v1h-1zM106 596h1v1h-1zM106 556h1v1h-1zM106 516h1v1h-1zM106 476h1v1h-1zM106 436h1v1h-1zM106 396h1v1h-1zM106 356h1v1h-1zM106 316h1v1h-1zM106 276h1v1h-1zM106 236h1v1h-1zM106 196h1v1h-1zM106 156h1v1h-1zM146 716h1v1h-1zM146 676h1v1h-1zM146 636h1v1h-1zM146 596h1v1h-1zM146 556h1v1h-1zM146 516h1v1h-1zM146 476h1v1h-1zM146 436h1v1h-1zM146 396h1v1h-1zM146 356h1v1h-1zM146 316h1v1h-1zM146 276h1v1h-1zM146 236h1v1h-1zM146 196h1v1h-1zM146 156h1v1h-1zM186 716h1v1h-1zM186 676h1v1h-1zM186 636h1v1h-1zM186 596h1v1h-1zM186 556h1v1h-1zM186 516h1v1h-1zM186 476h1v1h-1zM186 436h1v1h-1zM186 396h1v1h-1zM186 356h1v1h-1zM186 316h1v1h-1zM186 276h1v1h-1zM186 236h1v1h-1zM186 196h1v1h-1zM186 156h1v1h-1zM226 716h1v1h-1zM226 676h1v1h-1zM226 636h1v1h-1zM226 596h1v1h-1zM226 556h1v1h-1zM226 516h1v1h-1zM226 476h1v1h-1zM226 436h1v1h-1zM226 396h1v1h-1zM226 356h1v1h-1zM226 316h1v1h-1zM226 276h1v1h-1zM226 236h1v1h-1zM226 196h1v1h-1zM226 156h1v1h-1zM266 716h1v1h-1zM266 676h1v1h-1zM266 636h1v1h-1zM266 596h1v1h-1zM266 556h1v1h-1zM266 516h1v1h-1zM266 476h1v1h-1zM266 436h1v1h-1zM266 396h1v1h-1zM266 356h1v1h-1zM266 316h1v1h-1zM266 276h1v1h-1zM266 236h1v1h-1zM266 196h1v1h-1zM266 156h1v1h-1zM306 716h1v1h-1zM306 676h1v1h-1zM306 636h1v1h-1zM306 596h1v1h-1zM306 556h1v1h-1zM306 516h1v1h-1zM306 476h1v1h-1zM306 436h1v1h-1zM306 396h1v1h-1zM306 356h1v1h-1zM306 316h1v1h-1zM306 276h1v1h-1zM306 236h1v1h-1zM306 196h1v1h-1zM306 156h1v1h-1zM346 716h1v1h-1zM346 676h1v1h-1zM346 636h1v1h-1zM346 596h1v1h-1zM346 556h1v1h-1zM346 516h1v1h-1zM346 476h1v1h-1zM346 436h1v1h-1zM346 396h1v1h-1zM346 356h1v1h-1zM346 316h1v1h-1zM346 276h1v1h-1zM346 236h1v1h-1zM346 196h1v1h-1zM346 156h1v1h-1zM386 716h1v1h-1zM386 676h1v1h-1zM386 636h1v1h-1zM386 596h1v1h-1zM386 556h1v1h-1zM386 516h1v1h-1zM386 476h1v1h-1zM386 436h1v1h-1zM386 396h1v1h-1zM386 356h1v1h-1zM386 316h1v1h-1zM386 276h1v1h-1zM386 236h1v1h-1zM386 196h1v1h-1zM386 156h1v1h-1zM426 716h1v1h-1zM426 676h1v1h-1zM426 636h1v1h-1zM426 596h1v1h-1zM426 556h1v1h-1zM426 516h1v1h-1zM426 476h1v1h-1zM426 436h1v1h-1zM426 396h1v1h-1zM426 356h1v1h-1zM426 316h1v1h-1zM426 276h1v1h-1zM426 236h1v1h-1zM426 196h1v1h-1zM426 156h1v1h-1zM466 716h1v1h-1zM466 676h1v1h-1zM466 636h1v1h-1zM466 596h1v1h-1zM466 556h1v1h-1zM466 516h1v1h-1zM466 476h1v1h-1zM466 436h1v1h-1zM466 396h1v1h-1zM466 356h1v1h-1zM466 316h1v1h-1zM466 276h1v1h-1zM466 236h1v1h-1zM466 196h1v1h-1zM466 156h1v1h-1zM506 716h1v1h-1zM506 676h1v1h-1zM506 636h1v1h-1zM506 596h1v1h-1zM506 556h1v1h-1zM506 516h1v1h-1zM506 476h1v1h-1zM506 436h1v1h-1zM506 396h1v1h-1zM506 356h1v1h-1zM506 316h1v1h-1zM506 276h1v1h-1zM506 236h1v1h-1zM506 196h1v1h-1zM506 156h1v1h-1zM546 716h1v1h-1zM546 676h1v1h-1zM546 636h1v1h-1zM546 596h1v1h-1zM546 556h1v1h-1zM546 516h1v1h-1zM546 476h1v1h-1zM546 436h1v1h-1zM546 396h1v1h-1zM546 356h1v1h-1zM546 316h1v1h-1zM546 276h1v1h-1zM546 236h1v1h-1zM546 196h1v1h-1zM546 156h1v1h-1zM586 716h1v1h-1zM586 676h1v1h-1zM586 636h1v1h-1zM586 596h1v1h-1zM586 556h1v1h-1zM586 516h1v1h-1zM586 476h1v1h-1zM586 436h1v1h-1zM586 396h1v1h-1zM586 356h1v1h-1zM586 316h1v1h-1zM586 276h1v1h-1zM586 236h1v1h-1zM586 196h1v1h-1zM586 156h1v1h-1zM626 716h1v1h-1zM626 676h1v1h-1zM626 636h1v1h-1zM626 596h1v1h-1zM626 556h1v1h-1zM626 516h1v1h-1zM626 476h1v1h-1zM626 436h1v1h-1zM626 396h1v1h-1zM626 356h1v1h-1zM626 316h1v1h-1zM626 276h1v1h-1zM626 236h1v1h-1zM626 196h1v1h-1zM626 156h1v1h-1zM666 716h1v1h-1zM666 676h1v1h-1zM666 636h1v1h-1zM666 596h1v1h-1zM666 556h1v1h-1zM666 516h1v1h-1zM666 476h1v1h-1zM666 436h1v1h-1zM666 396h1v1h-1zM666 356h1v1h-1zM666 316h1v1h-1zM666 276h1v1h-1zM666 236h1v1h-1zM666 196h1v1h-1zM666 156h1v1h-1zM706 716h1v1h-1zM706 676h1v1h-1zM706 636h1v1h-1zM706 596h1v1h-1zM706 556h1v1h-1zM706 516h1v1h-1zM706 476h1v1h-1zM706 436h1v1h-1zM706 396h1v1h-1zM706 356h1v1h-1zM706 316h1v1h-1zM706 276h1v1h-1zM706 236h1v1h-1zM706 196h1v1h-1zM706 156h1v1h-1zM746 716h1v1h-1zM746 676h1v1h-1zM746 636h1v1h-1zM746 596h1v1h-1zM746 556h1v1h-1zM746 516h1v1h-1zM746 476h1v1h-1zM746 436h1v1h-1zM746 396h1v1h-1zM746 356h1v1h-1zM746 316h1v1h-1zM746 276h1v1h-1zM746 236h1v1h-1zM746 196h1v1h-1zM746 156h1v1h-1zM786 716h1v1h-1zM786 676h1v1h-1zM786 636h1v1h-1zM786 596h1v1h-1zM786 556h1v1h-1zM786 516h1v1h-1zM786 476h1v1h-1zM786 436h1v1h-1zM786 396h1v1h-1zM786 356h1v1h-1zM786 316h1v1h-1zM786 276h1v1h-1zM786 236h1v1h-1zM786 196h1v1h-1zM786 156h1v1h-1zM826 716h1v1h-1zM826 676h1v1h-1zM826 636h1v1h-1zM826 596h1v1h-1zM826 556h1v1h-1zM826 516h1v1h-1zM826 476h1v1h-1zM826 436h1v1h-1zM826 396h1v1h-1zM826 356h1v1h-1zM826 316h1v1h-1zM826 276h1v1h-1zM826 236h1v1h-1zM826 196h1v1h-1zM826 156h1v1h-1zM866 716h1v1h-1zM866 676h1v1h-1zM866 636h1v1h-1zM866 596h1v1h-1zM866 556h1v1h-1zM866 516h1v1h-1zM866 476h1v1h-1zM866 436h1v1h-1zM866 396h1v1h-1zM866 356h1v1h-1zM866 316h1v1h-1zM866 276h1v1h-1zM866 236h1v1h-1zM866 196h1v1h-1zM866 156h1v1h-1zM906 716h1v1h-1zM906 676h1v1h-1zM906 636h1v1h-1zM906 596h1v1h-1zM906 556h1v1h-1zM906 516h1v1h-1zM906 476h1v1h-1zM906 436h1v1h-1zM906 396h1v1h-1zM906 356h1v1h-1zM906 316h1v1h-1zM906 276h1v1h-1zM906 236h1v1h-1zM906 196h1v1h-1zM906 156h1v1h-1zM946 716h1v1h-1zM946 676h1v1h-1zM946 636h1v1h-1zM946 596h1v1h-1zM946 556h1v1h-1zM946 516h1v1h-1zM946 476h1v1h-1zM946 436h1v1h-1zM946 396h1v1h-1zM946 356h1v1h-1zM946 316h1v1h-1zM946 276h1v1h-1zM946 236h1v1h-1zM946 196h1v1h-1zM946 156h1v1h-1zM986 716h1v1h-1zM986 676h1v1h-1zM986 636h1v1h-1zM986 596h1v1h-1zM986 556h1v1h-1zM986 516h1v1h-1zM986 476h1v1h-1zM986 436h1v1h-1zM986 396h1v1h-1zM986 356h1v1h-1zM986 316h1v1h-1zM986 276h1v1h-1zM986 236h1v1h-1zM986 196h1v1h-1zM986 156h1v1h-1zM1026 716h1v1h-1zM1026 676h1v1h-1zM1026 636h1v1h-1zM1026 596h1v1h-1zM1026 556h1v1h-1zM1026 516h1v1h-1zM1026 476h1v1h-1zM1026 436h1v1h-1zM1026 396h1v1h-1zM1026 356h1v1h-1zM1026 316h1v1h-1zM1026 276h1v1h-1zM1026 236h1v1h-1zM1026 196h1v1h-1zM1026 156h1v1h-1zM1066 716h1v1h-1zM1066 676h1v1h-1zM1066 636h1v1h-1zM1066 596h1v1h-1zM1066 556h1v1h-1zM1066 516h1v1h-1zM1066 476h1v1h-1zM1066 436h1v1h-1zM1066 396h1v1h-1zM1066 356h1v1h-1zM1066 316h1v1h-1zM1066 276h1v1h-1zM1066 236h1v1h-1zM1066 196h1v1h-1zM1066 156h1v1h-1zM1106 716h1v1h-1zM1106 676h1v1h-1zM1106 636h1v1h-1zM1106 596h1v1h-1zM1106 556h1v1h-1zM1106 516h1v1h-1zM1106 476h1v1h-1zM1106 436h1v1h-1zM1106 396h1v1h-1zM1106 356h1v1h-1zM1106 316h1v1h-1zM1106 276h1v1h-1zM1106 236h1v1h-1zM1106 196h1v1h-1zM1106 156h1v1h-1z" fill="#fff" fill-opacity=".22"/>
<path d="M106.5 576V617M95 596.5H126" stroke="#ff5050" stroke-opacity=".42" stroke-width="1" fill="none"/>
<path d="M95 556H1139" stroke="#e0ac1e" stroke-opacity=".6" stroke-width="1.3" stroke-dasharray="4 2" fill="none"/>
<path d="M906.8 155V732" stroke="#e0ac1e" stroke-opacity=".5" stroke-width="1.9" stroke-dasharray="4 2" fill="none"/>
<rect x="182" y="319" width="10" height="10" fill="#0000a5" stroke="#2626b4" stroke-width=".5"/>
<rect x="582" y="319" width="10" height="10" fill="#0000a5" stroke="#2626b4" stroke-width=".5"/>
<rect x="182" y="511" width="10" height="10" fill="#0000a5" stroke="#2626b4" stroke-width=".5"/>
<rect x="582" y="511" width="10" height="10" fill="#0000a5" stroke="#2626b4" stroke-width=".5"/>
<path d="M575 448L1090 591.9" stroke="#f00" stroke-width="1.15" fill="none"/>
<path d="M1106.6 596.6 L1085.2 596.1 L1088.3 585.9z" fill="#f00"/>
<circle cx="575" cy="448" r="4.6" fill="none" stroke="#f22" stroke-width="1"/><path d="M570.4 448h9.2M575 443.4v9.2" stroke="#f22" stroke-width=".9"/>
<circle cx="906" cy="556" r="39.6" fill="url(#lens)"/>
<circle cx="906" cy="556" r="38.6" fill="none" stroke="#c3d6f2" stroke-opacity="0.25" stroke-width=".8"/>
<circle cx="906" cy="556" r="36.9" fill="none" stroke="#c3d6f2" stroke-opacity="0.36" stroke-width=".8"/>
<circle cx="906" cy="556" r="35.2" fill="none" stroke="#c3d6f2" stroke-opacity="0.36" stroke-width=".8"/>
<circle cx="906" cy="556" r="33.5" fill="none" stroke="#c3d6f2" stroke-opacity="0.3" stroke-width=".8"/>
<circle cx="906" cy="556" r="32" fill="none" stroke="#c3d6f2" stroke-opacity="0.2" stroke-width=".8"/>
<path d="M890.4 556.2H921.8M906.1 540.6V571.8" stroke="#e2e2e2" stroke-opacity=".93" stroke-width="3.7" fill="none"/>
<circle cx="906.3" cy="556" r="4.6" fill="none" stroke="#d9a51c" stroke-width=".8" stroke-dasharray="2 1.2"/><circle cx="906.3" cy="556" r="1.5" fill="#c8940f"/>
</svg>
<span class="t" style="left:820.00px;top:404.95px;font-size:14px;line-height:19px;color:#f0be1e;letter-spacing:-0.143px;">Griglia</span>
</div>
<div id="hscroll"><div class="thumb" style="left:131px;top:4px;width:854px;height:8px"></div>
<span class="t" style="left:1008.00px;top:-0.00px;font-size:13px;line-height:17px;color:#000;">10 &lt; 100</span>
</div>
<div id="vscroll"><div class="thumb" style="left:3px;top:136px;width:7px;height:330px"></div></div>
<div id="cmd">
<span class="t" style="left:5.5px;top:1px;font-size:13px;line-height:17px;color:#0000d2;letter-spacing:.35px"><i>Comando:</i> snapgrid</span>
<div class="abs" style="left:1067px;top:0;width:15px;height:21px;background:#fafafa;border-left:1px solid #e6e6e6"><div class="thumb" style="left:2px;top:1px;width:8px;height:17px"></div></div>
</div>
<span class="t" style="left:1.00px;top:667.82px;font-size:13.5px;line-height:18px;color:#000;letter-spacing:0.038px;">Secondo obiettivo punto:</span>
<div id="inp"></div>
<div id="inbtn"><svg class="abs" style="left:5px;top:8px" width="15" height="11" viewBox="0 0 15 11"><rect x=".7" y=".5" width="13" height="9.2" fill="#f8f8f8" stroke="#444" stroke-width=".8"/><rect x=".3" y=".1" width="13.8" height="3" fill="#000"/><rect x="10.4" y="1" width="1.2" height="1" fill="#ddd"/></svg></div>
</div>
<div id="layers">
<svg class="abs" style="left:0;top:0" width="301" height="92" viewBox="1154 108 301 92">
<defs><linearGradient id="lbg" x1="0" y1="0" x2="0" y2="1"><stop offset="0" stop-color="#f7f7f7"/><stop offset="1" stop-color="#e6e6e6"/></linearGradient></defs>
<circle cx="1164" cy="118" r="6.8" fill="#6b6b6b"/><path d="M1161.2 115.2L1166.8 120.8M1166.8 115.2L1161.2 120.8" stroke="#f2f2f2" stroke-width="1.9" stroke-linecap="round"/>
<circle cx="1182" cy="118" r="6.8" fill="#6b6b6b"/><path d="M1180.2 116.6V115h5.4v4h-1.6" fill="none" stroke="#f2f2f2" stroke-width="1"/><rect x="1178.6" y="117" width="5.2" height="4" fill="none" stroke="#f2f2f2" stroke-width="1"/>
<rect x="1156.2" y="130.9" width="58.3" height="24.6" fill="url(#lbg)" stroke="#ababab" stroke-width="1.2"/>
<rect x="1215.5" y="130.9" width="59.2" height="24.6" fill="url(#lbg)" stroke="#ababab" stroke-width="1.2"/>
<rect x="1275.7" y="130.9" width="58.8" height="24.6" fill="url(#lbg)" stroke="#ababab" stroke-width="1.2"/>
<rect x="1335.5" y="130.9" width="59.0" height="24.6" fill="url(#lbg)" stroke="#ababab" stroke-width="1.2"/>
<rect x="1395.5" y="130.9" width="58.5" height="24.6" fill="url(#lbg)" stroke="#ababab" stroke-width="1.2"/>
<g transform="translate(1185 142.9) scale(1.0 1.220)"><path d="M-7.2 0.2C-4.6 -4.4 4.6 -4.4 7.2 0.2C4.6 4.6 -4.6 4.6 -7.2 0.2z" fill="#000"/><path d="M-7.4 -0.6C-4.6 -5.6 4.6 -5.6 7.4 -0.6" fill="none" stroke="#000" stroke-width="1.3"/><path d="M-5.2 0.4C-3.4 -2.6 3.4 -2.6 5.2 0.4C3.4 3.2 -3.4 3.2 -5.2 0.4z" fill="#f2f2f2"/><circle cx="0" cy="0" r="2.9" fill="#000"/><circle cx="-1" cy="-1.1" r=".9" fill="#f2f2f2"/></g>
<g transform="translate(1245 142.9) scale(1.0 1.220)"><path d="M-7.2 0.2C-4.6 -4.4 4.6 -4.4 7.2 0.2C4.6 4.6 -4.6 4.6 -7.2 0.2z" fill="#a9a9a9"/><path d="M-7.4 -0.6C-4.6 -5.6 4.6 -5.6 7.4 -0.6" fill="none" stroke="#a9a9a9" stroke-width="1.3"/><path d="M-5.2 0.4C-3.4 -2.6 3.4 -2.6 5.2 0.4C3.4 3.2 -3.4 3.2 -5.2 0.4z" fill="#ededed"/><circle cx="0" cy="0" r="2.9" fill="#a9a9a9"/><circle cx="-1" cy="-1.1" r=".9" fill="#ededed"/></g>
<path d="M1299.3 143H1310.7M1305 137.3V148.7" stroke="#e40000" stroke-width="2.3"/>
<path d="M1359 143H1371" stroke="#e40000" stroke-width="2.4"/>
<g transform="translate(1418.2 149.6) rotate(-44.2)"><path d="M0 0L4.2 -1.6H17.20101007524618V1.6H4.2z" fill="#f0a830" stroke="#a8701c" stroke-width=".5"/><path d="M4.2 -0.32000000000000006H17.20101007524618" stroke="#ffd27a" stroke-width="1.1199999999999999"/><path d="M17.20101007524618 -1.6H19.20101007524618Q19.801010075246182 -1.6 19.801010075246182 -1.0V1.0Q19.801010075246182 1.6 19.20101007524618 1.6H17.20101007524618z" fill="#e23a2e" stroke="#a02018" stroke-width=".4"/><path d="M0 0L4.2 -1.6V1.6z" fill="#e8cfa0" stroke="#8a6a2c" stroke-width=".4"/><path d="M0 0L1.5 -0.576V0.576z" fill="#333"/></g>
<rect x="1155.6" y="156.6" width="298.8" height="43.4" fill="#fff"/>
<rect x="1155.6" y="177" width="298.8" height="19.8" fill="#084dd8"/>
<rect x="1161.4" y="163.6" width="15.4" height="8.2" fill="#fff" stroke="#000" stroke-width=".9"/>
<rect x="1161" y="183.4" width="16" height="8.6" fill="#374050"/>
<g transform="translate(1423.2 166.8) scale(1.02 1.244)"><path d="M-7.2 0.2C-4.6 -4.4 4.6 -4.4 7.2 0.2C4.6 4.6 -4.6 4.6 -7.2 0.2z" fill="#000"/><path d="M-7.4 -0.6C-4.6 -5.6 4.6 -5.6 7.4 -0.6" fill="none" stroke="#000" stroke-width="1.3"/><path d="M-5.2 0.4C-3.4 -2.6 3.4 -2.6 5.2 0.4C3.4 3.2 -3.4 3.2 -5.2 0.4z" fill="#fff"/><circle cx="0" cy="0" r="2.9" fill="#000"/><circle cx="-1" cy="-1.1" r=".9" fill="#fff"/></g>
<path d="M1441.8 165.8V163.0A3 3.2 0 0 1 1447.8 163.0V165.8" fill="none" stroke="#c4c4c4" stroke-width="1.3"/><rect x="1440.3999999999999" y="165.6" width="8.8" height="7.2" rx=".6" fill="#c4c4c4"/>
<g transform="translate(1395.4 192.2) rotate(-43.0)"><path d="M0 0L4.2 -1.4H13.249290204927082V1.4H4.2z" fill="#f0a830" stroke="#a8701c" stroke-width=".5"/><path d="M4.2 -0.27999999999999997H13.249290204927082" stroke="#ffd27a" stroke-width="0.9799999999999999"/><path d="M13.249290204927082 -1.4H15.249290204927082Q15.849290204927081 -1.4 15.849290204927081 -0.7999999999999999V0.7999999999999999Q15.849290204927081 1.4 15.249290204927082 1.4H13.249290204927082z" fill="#e23a2e" stroke="#a02018" stroke-width=".4"/><path d="M0 0L4.2 -1.4V1.4z" fill="#e8cfa0" stroke="#8a6a2c" stroke-width=".4"/><path d="M0 0L1.5 -0.504V0.504z" fill="#333"/></g>
<g transform="translate(1423.2 186.8) scale(1.02 1.244)"><path d="M-7.2 0.2C-4.6 -4.4 4.6 -4.4 7.2 0.2C4.6 4.6 -4.6 4.6 -7.2 0.2z" fill="#000"/><path d="M-7.4 -0.6C-4.6 -5.6 4.6 -5.6 7.4 -0.6" fill="none" stroke="#000" stroke-width="1.3"/><path d="M-5.2 0.4C-3.4 -2.6 3.4 -2.6 5.2 0.4C3.4 3.2 -3.4 3.2 -5.2 0.4z" fill="#0a4fd8"/><circle cx="0" cy="0" r="2.9" fill="#000"/><circle cx="-1" cy="-1.1" r=".9" fill="#0a4fd8"/></g>
<path d="M1441.8 185.8V183.0A3 3.2 0 0 1 1447.8 183.0V185.8" fill="none" stroke="#b9c0cc" stroke-width="1.3"/><rect x="1440.3999999999999" y="185.6" width="8.8" height="7.2" rx=".6" fill="#b9c0cc"/>
</svg>
<div class="abs" style="left:1.6px;top:92px;width:298.8px;height:598px;background:#fff"></div>
<div class="abs" style="left:1px;top:48px;width:1px;height:642px;background:#d9d9d9"></div>
<span class="t" style="left:126.15px;top:3.52px;font-size:11.5px;line-height:15px;color:#1c1c1c;letter-spacing:0.157px;">Elenco dei livelli</span>
<span class="t" style="left:29.40px;top:50.30px;font-size:13px;line-height:17px;color:#000;">0</span>
<span class="t" style="left:29.20px;top:70.40px;font-size:13px;line-height:17px;color:#fff;letter-spacing:0.046px;">Immagine</span>
</div>
<div id="rtb">
<svg class="abs" style="left:-1px;top:0" width="46" height="690" viewBox="1454 108 46 690">
<rect x="1456.4" y="120.4" width="48" height="42.6" rx="5" fill="#bcbcbc"/>
<rect x="1456.4" y="417" width="48" height="42.4" rx="5" fill="#bcbcbc"/>
<rect x="1461.6" y="116" width="1.8" height="1.8" fill="#a4a4a4"/>
<rect x="1468.1" y="116" width="1.8" height="1.8" fill="#a4a4a4"/>
<rect x="1474.6" y="116" width="1.8" height="1.8" fill="#a4a4a4"/>
<rect x="1481.1" y="116" width="1.8" height="1.8" fill="#a4a4a4"/>
<rect x="1487.6" y="116" width="1.8" height="1.8" fill="#a4a4a4"/>
<path d="M1458 261.5H1499" stroke="#7a7a7a" stroke-width="1" stroke-dasharray="1 2.3"/>
<path d="M1458 409.5H1499" stroke="#7a7a7a" stroke-width="1" stroke-dasharray="1 2.3"/>
<path d="M1458 512.4H1499" stroke="#7a7a7a" stroke-width="1" stroke-dasharray="1 2.3"/>
<g transform="translate(1463.2 127.1)"><rect x=".5" y=".5" width="26.8" height="26.8" fill="#fff" stroke="#111" stroke-width=".9"/><rect x="0" y="0" width="27.8" height="4.6" fill="#000"/><rect x="1" y="1" width="3.4" height="3" fill="#fff"/><path d="M6.6 11.6L14.6 9.2V20.6L6.6 23z" fill="#9a9a9a" stroke="#666" stroke-width=".5"/><path d="M9 10.8L17 8.4V19.8L9 22.2z" fill="#bdbdbd" stroke="#777" stroke-width=".5"/><path d="M11.6 10L20.4 7.4V19L11.6 21.6z" fill="#ececec" stroke="#888" stroke-width=".5"/><path d="M13.4 18.6L17.4 10.4L18.6 16.6M14.8 16L18.2 14.8" stroke="#e22" stroke-width=".8" fill="none"/></g>
<g transform="translate(1463.2 173.9)"><rect x=".5" y=".5" width="26.8" height="26.8" fill="#fff" stroke="#111" stroke-width=".9"/><rect x="0" y="0" width="27.8" height="4.6" fill="#000"/><rect x="1" y="1" width="3.4" height="3" fill="#fff"/><rect x="6.6" y="9.8" width="10.6" height="8.4" fill="#f6ecb0" stroke="#9a8a3a" stroke-width=".7"/><circle cx="16.6" cy="17.6" r="4.4" fill="#f6ecb0" fill-opacity=".8" stroke="#9a8a3a" stroke-width=".7"/></g>
<g transform="translate(1463.2 220)"><rect x=".5" y=".5" width="26.8" height="26.8" fill="#fff" stroke="#111" stroke-width=".9"/><rect x="0" y="0" width="27.8" height="4.6" fill="#000"/><rect x="1" y="1" width="3.4" height="3" fill="#fff"/><rect x="5" y="9.6" width="17.6" height="12.4" rx="2.2" fill="#f3f5fa" stroke="#bccbe6" stroke-width=".9"/></g>
<g transform="translate(1463.2 276)"><rect x=".5" y=".5" width="26.8" height="26.8" fill="#fff" stroke="#111" stroke-width=".9"/><rect x="0" y="0" width="27.8" height="4.6" fill="#000"/><rect x="1" y="1" width="3.4" height="3" fill="#fff"/><rect x="3.8" y="8.4" width="4" height="3.4" fill="#000"/><rect x="10.2" y="8.6" width="14" height="3" fill="#fff" stroke="#333" stroke-width=".6"/><rect x="3.8" y="13.8" width="4" height="3.4" fill="#000"/><rect x="10.2" y="14.0" width="14" height="3" fill="#fff" stroke="#333" stroke-width=".6"/><rect x="3.8" y="19.200000000000003" width="4" height="3.4" fill="#000"/><rect x="10.2" y="19.4" width="14" height="3" fill="#fff" stroke="#333" stroke-width=".6"/></g>
<g transform="translate(1463.2 322.1)"><rect x=".5" y=".5" width="26.8" height="26.8" fill="#fff" stroke="#111" stroke-width=".9"/><rect x="0" y="0" width="27.8" height="4.6" fill="#000"/><rect x="1" y="1" width="3.4" height="3" fill="#fff"/><path d="M7 9.4H21L15.2 16V23L12.8 21.6V16z" fill="#9c9c9c" stroke="#6e6e6e" stroke-width=".5"/><ellipse cx="14" cy="9.6" rx="7" ry="1.5" fill="#c9c9c9" stroke="#777" stroke-width=".5"/></g>
<g transform="translate(1463.2 367.9)"><rect x=".5" y=".5" width="26.8" height="26.8" fill="#fff" stroke="#111" stroke-width=".9"/><rect x="0" y="0" width="27.8" height="4.6" fill="#000"/><rect x="1" y="1" width="3.4" height="3" fill="#fff"/><path d="M6 9.4L10.4 12.4V20L6 23z" fill="#e4e4e4" stroke="#555" stroke-width=".6"/><rect x="10.4" y="12.4" width="10.4" height="7.6" rx="1.6" fill="#8c8c8c" stroke="#555" stroke-width=".5"/><path d="M13 12.6V19.8M15.4 12.6V19.8M17.8 12.6V19.8" stroke="#bdbdbd" stroke-width=".7"/><path d="M4 16.2H24" stroke="#ff7a7a" stroke-width=".6" stroke-dasharray="2 1"/></g>
<g transform="translate(1463.2 424.1)"><rect x=".5" y=".5" width="26.8" height="26.8" fill="#fff" stroke="#111" stroke-width=".9"/><rect x="0" y="0" width="27.8" height="4.6" fill="#000"/><rect x="1" y="1" width="3.4" height="3" fill="#fff"/><path d="M3 9.4H10M3 12.6H11M3 15.8H12M3 19H11.6" stroke="#777" stroke-width=".9" stroke-dasharray="2.2 .5"/><path d="M.5 22.6H27.3" stroke="#111" stroke-width=".7"/><text x="9" y="26.6" font-family="Liberation Sans, sans-serif" font-size="3.6" fill="#222" textLength="16" lengthAdjust="spacingAndGlyphs">command</text><text x="2" y="26.6" font-family="Liberation Sans, sans-serif" font-size="3.6" fill="#222">&lt;</text></g>
<g transform="translate(1463.2 471)"><rect x=".5" y=".5" width="26.8" height="26.8" fill="#fff" stroke="#111" stroke-width=".9"/><rect x="0" y="0" width="27.8" height="4.6" fill="#000"/><rect x="1" y="1" width="3.4" height="3" fill="#fff"/><rect x="7.6" y="9.4" width="12.8" height="14.4" rx=".8" fill="#c98a2e" stroke="#8c5a14" stroke-width=".5"/><rect x="9" y="11" width="10" height="11.6" fill="#f4f4f4"/><path d="M10.4 13.6H17.4M10.4 15.6H17.4M10.4 17.6H17.4M10.4 19.6H15" stroke="#c9c9c9" stroke-width=".7"/><path d="M11.2 10.8L11.8 8.6H16.2L16.8 10.8z" fill="#8a8a82" stroke="#5c5c54" stroke-width=".4"/><path d="M19 20L16.4 22.6H19z" fill="#9a9a9a"/></g>
<text x="1463.6" y="549.8" font-family="Liberation Sans, sans-serif" font-size="23.6" fill="#111" stroke="#e2e2e2" stroke-width=".55" textLength="27.6" lengthAdjust="spacingAndGlyphs">3D</text>
</svg>
</div>
<div id="status">
<span class="t" style="left:3.00px;top:7.64px;font-size:10px;line-height:13px;color:#111;letter-spacing:-0.117px;">200,10</span>
<span class="t" style="left:3.00px;top:28.04px;font-size:10px;line-height:13px;color:#111;letter-spacing:0.121px;">@82.9004,-26.9718</span>
<div class="abs" style="left:253px;top:5px;width:1px;height:38px;background:#5a5a5a"></div>
<span class="t" style="left:256.50px;top:7.64px;font-size:10px;line-height:13px;color:#111;letter-spacing:.55px;">200.2498&lt;3°</span>
<span class="t" style="left:256.50px;top:28.04px;font-size:10px;line-height:13px;color:#111;letter-spacing:.4px;">@87.1777&lt;342°</span>
<div class="abs" style="left:506.5px;top:21px;width:6px;height:6px;border-radius:3px;background:#cdcdcd"></div>
<div class="abs" style="left:940.5px;top:21px;width:6px;height:6px;border-radius:3px;background:#cdcdcd"></div>
<div class="abs" style="left:1269.5px;top:21px;width:6px;height:6px;border-radius:3px;background:#cdcdcd"></div>
<span class="t" style="left:587.50px;top:17.83px;font-size:10px;line-height:13px;color:#111;letter-spacing:0.168px;">Secondo obiettivo punto</span>
<span class="t" style="left:754.00px;top:17.83px;font-size:10px;line-height:13px;color:#111;letter-spacing:0.164px;">Indietro</span>
<span class="t" style="left:949.00px;top:11.64px;font-size:10px;line-height:13px;color:#111;letter-spacing:0.127px;">Entità selezionate:</span>
<span class="t" style="left:949.00px;top:23.24px;font-size:10px;line-height:13px;color:#111;letter-spacing:0.075px;">1 Immagine su livello "Immagine"</span>
<svg class="abs" style="left:715px;top:6px" width="22" height="34" viewBox="715 804 22 34"><path d="M717.6 816C717.6 809.6 720.6 806.4 726 806.4C731.4 806.4 734.4 809.6 734.4 816V826C734.4 832 731.4 835.6 726 835.6C720.6 835.6 717.6 832 717.6 826z" fill="#f4f4f4" stroke="#4a4a4a" stroke-width="1"/><path d="M717.6 818.6H734.4M726 806.4V818.6" stroke="#4a4a4a" stroke-width=".8"/><rect x="724.6" y="809.6" width="2.8" height="5.6" rx="1.4" fill="#fff" stroke="#4a4a4a" stroke-width=".7"/></svg>
</div>
</div>
</body></html>
